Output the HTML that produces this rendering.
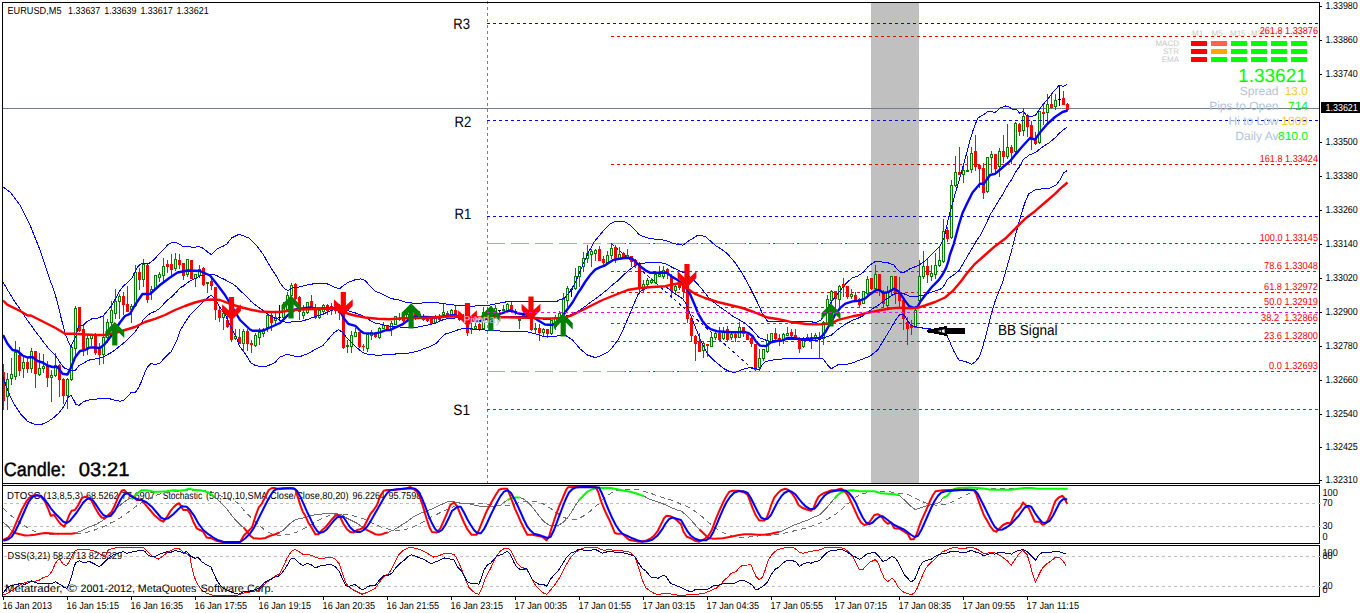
<!DOCTYPE html>
<html lang="en"><head><meta charset="utf-8"><title>EURUSD,M5</title>
<style>html,body{margin:0;padding:0;background:#fff;overflow:hidden}svg{display:block}text{font-family:"Liberation Sans",sans-serif;white-space:pre;text-rendering:geometricPrecision}</style></head><body>
<svg width="1360" height="613" viewBox="0 0 1360 613">
<rect width="1360" height="613" fill="#fff"/>
<g shape-rendering="crispEdges">
<rect x="871" y="3" width="48" height="480" fill="#c0c0c0"/>
</g>
<g shape-rendering="crispEdges">
<line x1="3" y1="108.5" x2="1319" y2="108.5" stroke="#708090" stroke-width="1"/>
<line x1="487.5" y1="1" x2="487.5" y2="483" stroke="#808080" stroke-width="1" stroke-dasharray="3 3" stroke-dashoffset="0"/>
<line x1="611" y1="36.5" x2="1318" y2="36.5" stroke="#ff0000" stroke-width="1" stroke-dasharray="3 3" stroke-dashoffset="0"/>
<line x1="611" y1="164.5" x2="1318" y2="164.5" stroke="#ff0000" stroke-width="1" stroke-dasharray="3 3" stroke-dashoffset="0"/>
<line x1="611" y1="243.5" x2="1318" y2="243.5" stroke="#ff0000" stroke-width="1" stroke-dasharray="3 3" stroke-dashoffset="0"/>
<line x1="611" y1="271.5" x2="1318" y2="271.5" stroke="#ff0000" stroke-width="1" stroke-dasharray="3 3" stroke-dashoffset="0"/>
<line x1="611" y1="292.5" x2="1318" y2="292.5" stroke="#ff0000" stroke-width="1" stroke-dasharray="3 3" stroke-dashoffset="0"/>
<line x1="611" y1="307.5" x2="1318" y2="307.5" stroke="#ff0000" stroke-width="1" stroke-dasharray="3 3" stroke-dashoffset="0"/>
<line x1="611" y1="323.5" x2="1318" y2="323.5" stroke="#ff0000" stroke-width="1" stroke-dasharray="3 3" stroke-dashoffset="0"/>
<line x1="611" y1="341.5" x2="1318" y2="341.5" stroke="#ff0000" stroke-width="1" stroke-dasharray="3 3" stroke-dashoffset="0"/>
<line x1="611" y1="371.5" x2="1318" y2="371.5" stroke="#ff0000" stroke-width="1" stroke-dasharray="3 3" stroke-dashoffset="0"/>
<line x1="487" y1="243.5" x2="866" y2="243.5" stroke="#ffa500" stroke-width="1" stroke-dasharray="18 6" stroke-dashoffset="0"/>
<line x1="487" y1="371.5" x2="866" y2="371.5" stroke="#ffa500" stroke-width="1" stroke-dasharray="18 6" stroke-dashoffset="0"/>
</g>
<line x1="611.5" y1="243.5" x2="755.5" y2="371.5" stroke="#0000ff" stroke-width="1" stroke-dasharray="3 3" shape-rendering="crispEdges"/>
<g shape-rendering="crispEdges">
<line x1="3.5" y1="364" x2="3.5" y2="410" stroke="#ff0000" stroke-width="1"/>
<rect x="2" y="372" width="3" height="29" fill="#ff0000"/>
<line x1="7.5" y1="373" x2="7.5" y2="410" stroke="#008000" stroke-width="1"/>
<rect x="6.5" y="379.5" width="2" height="17" fill="#fff" stroke="#008000"/>
<line x1="11.5" y1="358" x2="11.5" y2="385" stroke="#008000" stroke-width="1"/>
<rect x="10.5" y="374.5" width="2" height="4" fill="#fff" stroke="#008000"/>
<line x1="15.5" y1="341" x2="15.5" y2="380" stroke="#008000" stroke-width="1"/>
<rect x="14.5" y="352.5" width="2" height="24" fill="#fff" stroke="#008000"/>
<line x1="19.5" y1="347" x2="19.5" y2="376" stroke="#ff0000" stroke-width="1"/>
<rect x="18" y="355" width="3" height="16" fill="#ff0000"/>
<line x1="23.5" y1="356" x2="23.5" y2="378" stroke="#008000" stroke-width="1"/>
<rect x="22.5" y="362.5" width="2" height="6" fill="#fff" stroke="#008000"/>
<line x1="27.5" y1="358" x2="27.5" y2="373" stroke="#ff0000" stroke-width="1"/>
<rect x="26" y="362" width="3" height="7" fill="#ff0000"/>
<line x1="31.5" y1="348" x2="31.5" y2="373" stroke="#008000" stroke-width="1"/>
<rect x="30.5" y="351.5" width="2" height="17" fill="#fff" stroke="#008000"/>
<line x1="35.5" y1="351" x2="35.5" y2="388" stroke="#ff0000" stroke-width="1"/>
<rect x="34" y="351" width="3" height="23" fill="#ff0000"/>
<line x1="39.5" y1="353" x2="39.5" y2="376" stroke="#008000" stroke-width="1"/>
<rect x="38.5" y="368.5" width="2" height="6" fill="#fff" stroke="#008000"/>
<line x1="43.5" y1="354" x2="43.5" y2="373" stroke="#008000" stroke-width="1"/>
<rect x="42.5" y="366.5" width="2" height="2" fill="#fff" stroke="#008000"/>
<line x1="47.5" y1="361" x2="47.5" y2="387" stroke="#ff0000" stroke-width="1"/>
<rect x="46" y="366" width="3" height="12" fill="#ff0000"/>
<line x1="51.5" y1="370" x2="51.5" y2="402" stroke="#008000" stroke-width="1"/>
<rect x="50.5" y="375.5" width="2" height="2" fill="#fff" stroke="#008000"/>
<line x1="55.5" y1="353" x2="55.5" y2="377" stroke="#008000" stroke-width="1"/>
<rect x="54.5" y="365.5" width="2" height="10" fill="#fff" stroke="#008000"/>
<line x1="59.5" y1="364" x2="59.5" y2="397" stroke="#ff0000" stroke-width="1"/>
<rect x="58" y="365" width="3" height="15" fill="#ff0000"/>
<line x1="63.5" y1="378" x2="63.5" y2="404" stroke="#ff0000" stroke-width="1"/>
<rect x="62" y="379" width="3" height="17" fill="#ff0000"/>
<line x1="67.5" y1="378" x2="67.5" y2="409" stroke="#008000" stroke-width="1"/>
<rect x="66.5" y="379.5" width="2" height="16" fill="#fff" stroke="#008000"/>
<line x1="71.5" y1="346" x2="71.5" y2="381" stroke="#008000" stroke-width="1"/>
<rect x="70.5" y="347.5" width="2" height="32" fill="#fff" stroke="#008000"/>
<line x1="75.5" y1="306" x2="75.5" y2="357" stroke="#008000" stroke-width="1"/>
<rect x="74.5" y="308.5" width="2" height="40" fill="#fff" stroke="#008000"/>
<line x1="79.5" y1="307" x2="79.5" y2="332" stroke="#ff0000" stroke-width="1"/>
<rect x="78" y="307" width="3" height="24" fill="#ff0000"/>
<line x1="83.5" y1="326" x2="83.5" y2="356" stroke="#ff0000" stroke-width="1"/>
<rect x="82" y="329" width="3" height="20" fill="#ff0000"/>
<line x1="87.5" y1="334" x2="87.5" y2="355" stroke="#008000" stroke-width="1"/>
<rect x="86.5" y="338.5" width="2" height="9" fill="#fff" stroke="#008000"/>
<line x1="91.5" y1="335" x2="91.5" y2="346" stroke="#008000" stroke-width="1"/>
<rect x="90.5" y="335.5" width="2" height="3" fill="#fff" stroke="#008000"/>
<line x1="95.5" y1="333" x2="95.5" y2="355" stroke="#ff0000" stroke-width="1"/>
<rect x="94" y="334" width="3" height="19" fill="#ff0000"/>
<line x1="99.5" y1="343" x2="99.5" y2="365" stroke="#ff0000" stroke-width="1"/>
<rect x="98" y="349" width="3" height="6" fill="#ff0000"/>
<line x1="103.5" y1="316" x2="103.5" y2="364" stroke="#008000" stroke-width="1"/>
<rect x="102.5" y="337.5" width="2" height="17" fill="#fff" stroke="#008000"/>
<line x1="107.5" y1="319" x2="107.5" y2="343" stroke="#008000" stroke-width="1"/>
<rect x="106.5" y="322.5" width="2" height="15" fill="#fff" stroke="#008000"/>
<line x1="111.5" y1="301" x2="111.5" y2="326" stroke="#008000" stroke-width="1"/>
<rect x="110.5" y="310.5" width="2" height="12" fill="#fff" stroke="#008000"/>
<line x1="115.5" y1="289" x2="115.5" y2="319" stroke="#008000" stroke-width="1"/>
<rect x="114.5" y="301.5" width="2" height="12" fill="#fff" stroke="#008000"/>
<line x1="119.5" y1="294" x2="119.5" y2="319" stroke="#008000" stroke-width="1"/>
<rect x="118.5" y="296.5" width="2" height="5" fill="#fff" stroke="#008000"/>
<line x1="123.5" y1="292" x2="123.5" y2="315" stroke="#ff0000" stroke-width="1"/>
<rect x="122" y="296" width="3" height="9" fill="#ff0000"/>
<line x1="127.5" y1="286" x2="127.5" y2="312" stroke="#ff0000" stroke-width="1"/>
<rect x="126" y="304" width="3" height="8" fill="#ff0000"/>
<line x1="131.5" y1="304" x2="131.5" y2="323" stroke="#008000" stroke-width="1"/>
<rect x="130.5" y="306.5" width="2" height="3" fill="#fff" stroke="#008000"/>
<line x1="135.5" y1="265" x2="135.5" y2="307" stroke="#008000" stroke-width="1"/>
<rect x="134.5" y="272.5" width="2" height="33" fill="#fff" stroke="#008000"/>
<line x1="139.5" y1="268" x2="139.5" y2="290" stroke="#ff0000" stroke-width="1"/>
<rect x="138" y="272" width="3" height="8" fill="#ff0000"/>
<line x1="143.5" y1="259" x2="143.5" y2="287" stroke="#008000" stroke-width="1"/>
<rect x="142.5" y="264.5" width="2" height="15" fill="#fff" stroke="#008000"/>
<line x1="147.5" y1="264" x2="147.5" y2="303" stroke="#ff0000" stroke-width="1"/>
<rect x="146" y="265" width="3" height="35" fill="#ff0000"/>
<line x1="151.5" y1="286" x2="151.5" y2="300" stroke="#008000" stroke-width="1"/>
<rect x="150.5" y="289.5" width="2" height="3" fill="#fff" stroke="#008000"/>
<line x1="155.5" y1="275" x2="155.5" y2="289" stroke="#008000" stroke-width="1"/>
<rect x="154.5" y="275.5" width="2" height="13" fill="#fff" stroke="#008000"/>
<line x1="159.5" y1="272" x2="159.5" y2="282" stroke="#008000" stroke-width="1"/>
<rect x="158.5" y="274.5" width="2" height="3" fill="#fff" stroke="#008000"/>
<line x1="163.5" y1="258" x2="163.5" y2="281" stroke="#008000" stroke-width="1"/>
<rect x="162.5" y="266.5" width="2" height="9" fill="#fff" stroke="#008000"/>
<line x1="167.5" y1="260" x2="167.5" y2="273" stroke="#ff0000" stroke-width="1"/>
<rect x="166" y="264" width="3" height="3" fill="#ff0000"/>
<line x1="171.5" y1="254" x2="171.5" y2="275" stroke="#ff0000" stroke-width="1"/>
<rect x="170" y="264" width="3" height="6" fill="#ff0000"/>
<line x1="175.5" y1="253" x2="175.5" y2="271" stroke="#008000" stroke-width="1"/>
<rect x="174.5" y="259.5" width="2" height="9" fill="#fff" stroke="#008000"/>
<line x1="179.5" y1="254" x2="179.5" y2="269" stroke="#ff0000" stroke-width="1"/>
<rect x="178" y="260" width="3" height="5" fill="#ff0000"/>
<line x1="183.5" y1="263" x2="183.5" y2="280" stroke="#ff0000" stroke-width="1"/>
<rect x="182" y="263" width="3" height="13" fill="#ff0000"/>
<line x1="187.5" y1="259" x2="187.5" y2="277" stroke="#008000" stroke-width="1"/>
<rect x="186.5" y="259.5" width="2" height="15" fill="#fff" stroke="#008000"/>
<line x1="191.5" y1="260" x2="191.5" y2="279" stroke="#ff0000" stroke-width="1"/>
<rect x="190" y="260" width="3" height="19" fill="#ff0000"/>
<line x1="195.5" y1="274" x2="195.5" y2="287" stroke="#008000" stroke-width="1"/>
<rect x="194.5" y="274.5" width="2" height="4" fill="#fff" stroke="#008000"/>
<line x1="199.5" y1="265" x2="199.5" y2="278" stroke="#008000" stroke-width="1"/>
<rect x="198.5" y="269.5" width="2" height="6" fill="#fff" stroke="#008000"/>
<line x1="203.5" y1="267" x2="203.5" y2="286" stroke="#ff0000" stroke-width="1"/>
<rect x="202" y="268" width="3" height="17" fill="#ff0000"/>
<line x1="207.5" y1="282" x2="207.5" y2="293" stroke="#008000" stroke-width="1"/>
<rect x="206.5" y="282.5" width="2" height="1" fill="#fff" stroke="#008000"/>
<line x1="211.5" y1="279" x2="211.5" y2="290" stroke="#ff0000" stroke-width="1"/>
<rect x="210" y="281" width="3" height="5" fill="#ff0000"/>
<line x1="215.5" y1="287" x2="215.5" y2="320" stroke="#ff0000" stroke-width="1"/>
<rect x="214" y="287" width="3" height="23" fill="#ff0000"/>
<line x1="219.5" y1="308" x2="219.5" y2="322" stroke="#ff0000" stroke-width="1"/>
<rect x="218" y="310" width="3" height="8" fill="#ff0000"/>
<line x1="223.5" y1="312" x2="223.5" y2="330" stroke="#008000" stroke-width="1"/>
<rect x="222.5" y="313.5" width="2" height="4" fill="#fff" stroke="#008000"/>
<line x1="227.5" y1="316" x2="227.5" y2="328" stroke="#ff0000" stroke-width="1"/>
<rect x="226" y="320" width="3" height="7" fill="#ff0000"/>
<line x1="231.5" y1="318" x2="231.5" y2="342" stroke="#ff0000" stroke-width="1"/>
<rect x="230" y="319" width="3" height="21" fill="#ff0000"/>
<line x1="235.5" y1="329" x2="235.5" y2="340" stroke="#008000" stroke-width="1"/>
<rect x="234.5" y="336.5" width="2" height="2" fill="#fff" stroke="#008000"/>
<line x1="239.5" y1="329" x2="239.5" y2="344" stroke="#ff0000" stroke-width="1"/>
<rect x="238" y="337" width="3" height="7" fill="#ff0000"/>
<line x1="243.5" y1="329" x2="243.5" y2="352" stroke="#008000" stroke-width="1"/>
<rect x="242.5" y="331.5" width="2" height="12" fill="#fff" stroke="#008000"/>
<line x1="247.5" y1="329" x2="247.5" y2="351" stroke="#ff0000" stroke-width="1"/>
<rect x="246" y="331" width="3" height="13" fill="#ff0000"/>
<line x1="251.5" y1="340" x2="251.5" y2="353" stroke="#ff0000" stroke-width="1"/>
<rect x="250" y="343" width="3" height="2" fill="#ff0000"/>
<line x1="255.5" y1="333" x2="255.5" y2="347" stroke="#008000" stroke-width="1"/>
<rect x="254.5" y="335.5" width="2" height="10" fill="#fff" stroke="#008000"/>
<line x1="259.5" y1="328" x2="259.5" y2="345" stroke="#008000" stroke-width="1"/>
<rect x="258.5" y="332.5" width="2" height="5" fill="#fff" stroke="#008000"/>
<line x1="263.5" y1="328" x2="263.5" y2="337" stroke="#008000" stroke-width="1"/>
<rect x="262.5" y="329.5" width="2" height="4" fill="#fff" stroke="#008000"/>
<line x1="267.5" y1="314" x2="267.5" y2="332" stroke="#008000" stroke-width="1"/>
<rect x="266.5" y="315.5" width="2" height="12" fill="#fff" stroke="#008000"/>
<line x1="271.5" y1="313" x2="271.5" y2="331" stroke="#ff0000" stroke-width="1"/>
<rect x="270" y="315" width="3" height="8" fill="#ff0000"/>
<line x1="275.5" y1="313" x2="275.5" y2="324" stroke="#008000" stroke-width="1"/>
<rect x="274.5" y="317.5" width="2" height="3" fill="#fff" stroke="#008000"/>
<line x1="279.5" y1="305" x2="279.5" y2="321" stroke="#000" stroke-width="1"/>
<line x1="278" y1="317.5" x2="281" y2="317.5" stroke="#000" stroke-width="1"/>
<line x1="283.5" y1="302" x2="283.5" y2="322" stroke="#008000" stroke-width="1"/>
<rect x="282.5" y="305.5" width="2" height="12" fill="#fff" stroke="#008000"/>
<line x1="287.5" y1="292" x2="287.5" y2="311" stroke="#008000" stroke-width="1"/>
<rect x="286.5" y="295.5" width="2" height="14" fill="#fff" stroke="#008000"/>
<line x1="291.5" y1="283" x2="291.5" y2="297" stroke="#008000" stroke-width="1"/>
<rect x="290.5" y="285.5" width="2" height="10" fill="#fff" stroke="#008000"/>
<line x1="295.5" y1="283" x2="295.5" y2="303" stroke="#ff0000" stroke-width="1"/>
<rect x="294" y="284" width="3" height="15" fill="#ff0000"/>
<line x1="299.5" y1="296" x2="299.5" y2="320" stroke="#ff0000" stroke-width="1"/>
<rect x="298" y="297" width="3" height="15" fill="#ff0000"/>
<line x1="303.5" y1="305" x2="303.5" y2="319" stroke="#008000" stroke-width="1"/>
<rect x="302.5" y="312.5" width="2" height="3" fill="#fff" stroke="#008000"/>
<line x1="307.5" y1="302" x2="307.5" y2="314" stroke="#008000" stroke-width="1"/>
<rect x="306.5" y="302.5" width="2" height="10" fill="#fff" stroke="#008000"/>
<line x1="311.5" y1="295" x2="311.5" y2="310" stroke="#ff0000" stroke-width="1"/>
<rect x="310" y="301" width="3" height="6" fill="#ff0000"/>
<line x1="315.5" y1="304" x2="315.5" y2="319" stroke="#ff0000" stroke-width="1"/>
<rect x="314" y="310" width="3" height="8" fill="#ff0000"/>
<line x1="319.5" y1="308" x2="319.5" y2="319" stroke="#008000" stroke-width="1"/>
<rect x="318.5" y="310.5" width="2" height="7" fill="#fff" stroke="#008000"/>
<line x1="323.5" y1="304" x2="323.5" y2="313" stroke="#008000" stroke-width="1"/>
<rect x="322.5" y="305.5" width="2" height="6" fill="#fff" stroke="#008000"/>
<line x1="327.5" y1="304" x2="327.5" y2="315" stroke="#ff0000" stroke-width="1"/>
<rect x="326" y="305" width="3" height="6" fill="#ff0000"/>
<line x1="331.5" y1="303" x2="331.5" y2="315" stroke="#ff0000" stroke-width="1"/>
<rect x="330" y="306" width="3" height="4" fill="#ff0000"/>
<line x1="335.5" y1="305" x2="335.5" y2="314" stroke="#ff0000" stroke-width="1"/>
<rect x="334" y="307" width="3" height="4" fill="#ff0000"/>
<line x1="339.5" y1="304" x2="339.5" y2="320" stroke="#ff0000" stroke-width="1"/>
<rect x="338" y="308" width="3" height="5" fill="#ff0000"/>
<line x1="343.5" y1="292" x2="343.5" y2="349" stroke="#ff0000" stroke-width="1"/>
<rect x="342" y="293" width="3" height="55" fill="#ff0000"/>
<line x1="347.5" y1="340" x2="347.5" y2="353" stroke="#008000" stroke-width="1"/>
<rect x="346.5" y="345.5" width="2" height="1" fill="#fff" stroke="#008000"/>
<line x1="351.5" y1="331" x2="351.5" y2="353" stroke="#008000" stroke-width="1"/>
<rect x="350.5" y="335.5" width="2" height="11" fill="#fff" stroke="#008000"/>
<line x1="355.5" y1="328" x2="355.5" y2="337" stroke="#008000" stroke-width="1"/>
<rect x="354.5" y="332.5" width="2" height="4" fill="#fff" stroke="#008000"/>
<line x1="359.5" y1="332" x2="359.5" y2="348" stroke="#ff0000" stroke-width="1"/>
<rect x="358" y="332" width="3" height="15" fill="#ff0000"/>
<line x1="363.5" y1="344" x2="363.5" y2="351" stroke="#ff0000" stroke-width="1"/>
<line x1="362" y1="346.5" x2="365" y2="346.5" stroke="#ff0000" stroke-width="1"/>
<line x1="367.5" y1="334" x2="367.5" y2="352" stroke="#008000" stroke-width="1"/>
<rect x="366.5" y="334.5" width="2" height="14" fill="#fff" stroke="#008000"/>
<line x1="371.5" y1="330" x2="371.5" y2="340" stroke="#008000" stroke-width="1"/>
<rect x="370.5" y="332.5" width="2" height="3" fill="#fff" stroke="#008000"/>
<line x1="375.5" y1="332" x2="375.5" y2="338" stroke="#ff0000" stroke-width="1"/>
<rect x="374" y="333" width="3" height="4" fill="#ff0000"/>
<line x1="379.5" y1="327" x2="379.5" y2="339" stroke="#008000" stroke-width="1"/>
<rect x="378.5" y="328.5" width="2" height="9" fill="#fff" stroke="#008000"/>
<line x1="383.5" y1="322" x2="383.5" y2="329" stroke="#008000" stroke-width="1"/>
<rect x="382.5" y="325.5" width="2" height="3" fill="#fff" stroke="#008000"/>
<line x1="387.5" y1="325" x2="387.5" y2="331" stroke="#ff0000" stroke-width="1"/>
<rect x="386" y="326" width="3" height="5" fill="#ff0000"/>
<line x1="391.5" y1="321" x2="391.5" y2="336" stroke="#008000" stroke-width="1"/>
<rect x="390.5" y="323.5" width="2" height="6" fill="#fff" stroke="#008000"/>
<line x1="395.5" y1="316" x2="395.5" y2="325" stroke="#008000" stroke-width="1"/>
<rect x="394.5" y="316.5" width="2" height="8" fill="#fff" stroke="#008000"/>
<line x1="399.5" y1="313" x2="399.5" y2="321" stroke="#ff0000" stroke-width="1"/>
<rect x="398" y="318" width="3" height="2" fill="#ff0000"/>
<line x1="403.5" y1="314" x2="403.5" y2="322" stroke="#ff0000" stroke-width="1"/>
<rect x="402" y="316" width="3" height="5" fill="#ff0000"/>
<line x1="407.5" y1="312" x2="407.5" y2="321" stroke="#008000" stroke-width="1"/>
<rect x="406.5" y="314.5" width="2" height="4" fill="#fff" stroke="#008000"/>
<line x1="411.5" y1="311" x2="411.5" y2="320" stroke="#008000" stroke-width="1"/>
<rect x="410.5" y="314.5" width="2" height="3" fill="#fff" stroke="#008000"/>
<line x1="415.5" y1="311" x2="415.5" y2="320" stroke="#ff0000" stroke-width="1"/>
<rect x="414" y="313" width="3" height="5" fill="#ff0000"/>
<line x1="419.5" y1="311" x2="419.5" y2="319" stroke="#008000" stroke-width="1"/>
<rect x="418.5" y="314.5" width="2" height="2" fill="#fff" stroke="#008000"/>
<line x1="423.5" y1="314" x2="423.5" y2="321" stroke="#ff0000" stroke-width="1"/>
<rect x="422" y="316" width="3" height="4" fill="#ff0000"/>
<line x1="427.5" y1="316" x2="427.5" y2="322" stroke="#ff0000" stroke-width="1"/>
<rect x="426" y="317" width="3" height="4" fill="#ff0000"/>
<line x1="431.5" y1="318" x2="431.5" y2="325" stroke="#ff0000" stroke-width="1"/>
<rect x="430" y="318" width="3" height="6" fill="#ff0000"/>
<line x1="435.5" y1="315" x2="435.5" y2="324" stroke="#008000" stroke-width="1"/>
<rect x="434.5" y="316.5" width="2" height="6" fill="#fff" stroke="#008000"/>
<line x1="439.5" y1="314" x2="439.5" y2="321" stroke="#ff0000" stroke-width="1"/>
<rect x="438" y="316" width="3" height="4" fill="#ff0000"/>
<line x1="443.5" y1="304" x2="443.5" y2="316" stroke="#008000" stroke-width="1"/>
<rect x="442.5" y="312.5" width="2" height="2" fill="#fff" stroke="#008000"/>
<line x1="447.5" y1="311" x2="447.5" y2="317" stroke="#ff0000" stroke-width="1"/>
<rect x="446" y="313" width="3" height="4" fill="#ff0000"/>
<line x1="451.5" y1="309" x2="451.5" y2="317" stroke="#008000" stroke-width="1"/>
<rect x="450.5" y="310.5" width="2" height="6" fill="#fff" stroke="#008000"/>
<line x1="455.5" y1="306" x2="455.5" y2="318" stroke="#ff0000" stroke-width="1"/>
<rect x="454" y="310" width="3" height="7" fill="#ff0000"/>
<line x1="459.5" y1="312" x2="459.5" y2="321" stroke="#ff0000" stroke-width="1"/>
<rect x="458" y="314" width="3" height="6" fill="#ff0000"/>
<line x1="463.5" y1="314" x2="463.5" y2="322" stroke="#ff0000" stroke-width="1"/>
<rect x="462" y="316" width="3" height="5" fill="#ff0000"/>
<line x1="467.5" y1="320" x2="467.5" y2="336" stroke="#ff0000" stroke-width="1"/>
<rect x="466" y="325" width="3" height="8" fill="#ff0000"/>
<line x1="471.5" y1="322" x2="471.5" y2="334" stroke="#008000" stroke-width="1"/>
<rect x="470.5" y="328.5" width="2" height="1" fill="#fff" stroke="#008000"/>
<line x1="475.5" y1="322" x2="475.5" y2="330" stroke="#008000" stroke-width="1"/>
<rect x="474.5" y="326.5" width="2" height="2" fill="#fff" stroke="#008000"/>
<line x1="479.5" y1="323" x2="479.5" y2="331" stroke="#ff0000" stroke-width="1"/>
<rect x="478" y="324" width="3" height="5" fill="#ff0000"/>
<line x1="483.5" y1="307" x2="483.5" y2="330" stroke="#008000" stroke-width="1"/>
<rect x="482.5" y="312.5" width="2" height="16" fill="#fff" stroke="#008000"/>
<line x1="487.5" y1="307" x2="487.5" y2="319" stroke="#008000" stroke-width="1"/>
<rect x="486.5" y="310.5" width="2" height="5" fill="#fff" stroke="#008000"/>
<line x1="491.5" y1="306" x2="491.5" y2="316" stroke="#008000" stroke-width="1"/>
<rect x="490.5" y="308.5" width="2" height="5" fill="#fff" stroke="#008000"/>
<line x1="495.5" y1="305" x2="495.5" y2="313" stroke="#008000" stroke-width="1"/>
<rect x="494.5" y="308.5" width="2" height="3" fill="#fff" stroke="#008000"/>
<line x1="499.5" y1="310" x2="499.5" y2="313" stroke="#000" stroke-width="1"/>
<line x1="498" y1="310.5" x2="501" y2="310.5" stroke="#000" stroke-width="1"/>
<line x1="503.5" y1="305" x2="503.5" y2="311" stroke="#008000" stroke-width="1"/>
<rect x="502.5" y="309.5" width="2" height="1" fill="#fff" stroke="#008000"/>
<line x1="507.5" y1="303" x2="507.5" y2="311" stroke="#008000" stroke-width="1"/>
<rect x="506.5" y="304.5" width="2" height="6" fill="#fff" stroke="#008000"/>
<line x1="511.5" y1="302" x2="511.5" y2="312" stroke="#ff0000" stroke-width="1"/>
<rect x="510" y="305" width="3" height="6" fill="#ff0000"/>
<line x1="515.5" y1="309" x2="515.5" y2="315" stroke="#ff0000" stroke-width="1"/>
<rect x="514" y="311" width="3" height="2" fill="#ff0000"/>
<line x1="519.5" y1="319" x2="519.5" y2="329" stroke="#008000" stroke-width="1"/>
<rect x="518.5" y="319.5" width="2" height="1" fill="#fff" stroke="#008000"/>
<line x1="523.5" y1="313" x2="523.5" y2="319" stroke="#ff0000" stroke-width="1"/>
<rect x="522" y="314" width="3" height="3" fill="#ff0000"/>
<line x1="527.5" y1="313" x2="527.5" y2="319" stroke="#008000" stroke-width="1"/>
<rect x="526.5" y="315.5" width="2" height="1" fill="#fff" stroke="#008000"/>
<line x1="531.5" y1="311" x2="531.5" y2="331" stroke="#ff0000" stroke-width="1"/>
<rect x="530" y="312" width="3" height="18" fill="#ff0000"/>
<line x1="535.5" y1="323" x2="535.5" y2="333" stroke="#008000" stroke-width="1"/>
<rect x="534.5" y="328.5" width="2" height="1" fill="#fff" stroke="#008000"/>
<line x1="539.5" y1="324" x2="539.5" y2="341" stroke="#ff0000" stroke-width="1"/>
<rect x="538" y="328" width="3" height="5" fill="#ff0000"/>
<line x1="543.5" y1="328" x2="543.5" y2="337" stroke="#008000" stroke-width="1"/>
<rect x="542.5" y="329.5" width="2" height="3" fill="#fff" stroke="#008000"/>
<line x1="547.5" y1="329" x2="547.5" y2="338" stroke="#ff0000" stroke-width="1"/>
<rect x="546" y="329" width="3" height="5" fill="#ff0000"/>
<line x1="551.5" y1="320" x2="551.5" y2="335" stroke="#008000" stroke-width="1"/>
<rect x="550.5" y="320.5" width="2" height="13" fill="#fff" stroke="#008000"/>
<line x1="555.5" y1="315" x2="555.5" y2="330" stroke="#008000" stroke-width="1"/>
<rect x="554.5" y="317.5" width="2" height="9" fill="#fff" stroke="#008000"/>
<line x1="559.5" y1="311" x2="559.5" y2="323" stroke="#008000" stroke-width="1"/>
<rect x="558.5" y="313.5" width="2" height="7" fill="#fff" stroke="#008000"/>
<line x1="563.5" y1="293" x2="563.5" y2="315" stroke="#008000" stroke-width="1"/>
<rect x="562.5" y="299.5" width="2" height="14" fill="#fff" stroke="#008000"/>
<line x1="567.5" y1="286" x2="567.5" y2="307" stroke="#008000" stroke-width="1"/>
<rect x="566.5" y="288.5" width="2" height="12" fill="#fff" stroke="#008000"/>
<line x1="571.5" y1="288" x2="571.5" y2="297" stroke="#000" stroke-width="1"/>
<line x1="570" y1="289.5" x2="573" y2="289.5" stroke="#000" stroke-width="1"/>
<line x1="575.5" y1="268" x2="575.5" y2="290" stroke="#008000" stroke-width="1"/>
<rect x="574.5" y="276.5" width="2" height="12" fill="#fff" stroke="#008000"/>
<line x1="579.5" y1="266" x2="579.5" y2="287" stroke="#008000" stroke-width="1"/>
<rect x="578.5" y="266.5" width="2" height="10" fill="#fff" stroke="#008000"/>
<line x1="583.5" y1="252" x2="583.5" y2="272" stroke="#008000" stroke-width="1"/>
<rect x="582.5" y="258.5" width="2" height="8" fill="#fff" stroke="#008000"/>
<line x1="587.5" y1="245" x2="587.5" y2="263" stroke="#008000" stroke-width="1"/>
<rect x="586.5" y="253.5" width="2" height="5" fill="#fff" stroke="#008000"/>
<line x1="591.5" y1="249" x2="591.5" y2="267" stroke="#008000" stroke-width="1"/>
<rect x="590.5" y="251.5" width="2" height="3" fill="#fff" stroke="#008000"/>
<line x1="595.5" y1="249" x2="595.5" y2="261" stroke="#008000" stroke-width="1"/>
<rect x="594.5" y="250.5" width="2" height="3" fill="#fff" stroke="#008000"/>
<line x1="599.5" y1="246" x2="599.5" y2="261" stroke="#ff0000" stroke-width="1"/>
<rect x="598" y="249" width="3" height="12" fill="#ff0000"/>
<line x1="603.5" y1="256" x2="603.5" y2="266" stroke="#ff0000" stroke-width="1"/>
<rect x="602" y="259" width="3" height="4" fill="#ff0000"/>
<line x1="607.5" y1="251" x2="607.5" y2="263" stroke="#008000" stroke-width="1"/>
<rect x="606.5" y="255.5" width="2" height="7" fill="#fff" stroke="#008000"/>
<line x1="611.5" y1="244" x2="611.5" y2="259" stroke="#008000" stroke-width="1"/>
<rect x="610.5" y="248.5" width="2" height="7" fill="#fff" stroke="#008000"/>
<line x1="615.5" y1="245" x2="615.5" y2="263" stroke="#ff0000" stroke-width="1"/>
<rect x="614" y="247" width="3" height="12" fill="#ff0000"/>
<line x1="619.5" y1="247" x2="619.5" y2="260" stroke="#008000" stroke-width="1"/>
<rect x="618.5" y="254.5" width="2" height="4" fill="#fff" stroke="#008000"/>
<line x1="623.5" y1="252" x2="623.5" y2="259" stroke="#ff0000" stroke-width="1"/>
<rect x="622" y="253" width="3" height="5" fill="#ff0000"/>
<line x1="627.5" y1="249" x2="627.5" y2="259" stroke="#008000" stroke-width="1"/>
<rect x="626.5" y="255.5" width="2" height="3" fill="#fff" stroke="#008000"/>
<line x1="631.5" y1="256" x2="631.5" y2="267" stroke="#ff0000" stroke-width="1"/>
<rect x="630" y="256" width="3" height="6" fill="#ff0000"/>
<line x1="635.5" y1="259" x2="635.5" y2="268" stroke="#ff0000" stroke-width="1"/>
<rect x="634" y="260" width="3" height="6" fill="#ff0000"/>
<line x1="639.5" y1="262" x2="639.5" y2="294" stroke="#ff0000" stroke-width="1"/>
<rect x="638" y="263" width="3" height="26" fill="#ff0000"/>
<line x1="643.5" y1="280" x2="643.5" y2="293" stroke="#008000" stroke-width="1"/>
<rect x="642.5" y="284.5" width="2" height="3" fill="#fff" stroke="#008000"/>
<line x1="647.5" y1="278" x2="647.5" y2="287" stroke="#008000" stroke-width="1"/>
<rect x="646.5" y="280.5" width="2" height="4" fill="#fff" stroke="#008000"/>
<line x1="651.5" y1="278" x2="651.5" y2="284" stroke="#008000" stroke-width="1"/>
<rect x="650.5" y="280.5" width="2" height="2" fill="#fff" stroke="#008000"/>
<line x1="655.5" y1="274" x2="655.5" y2="284" stroke="#008000" stroke-width="1"/>
<rect x="654.5" y="274.5" width="2" height="8" fill="#fff" stroke="#008000"/>
<line x1="659.5" y1="266" x2="659.5" y2="277" stroke="#008000" stroke-width="1"/>
<rect x="658.5" y="274.5" width="2" height="2" fill="#fff" stroke="#008000"/>
<line x1="663.5" y1="266" x2="663.5" y2="279" stroke="#008000" stroke-width="1"/>
<rect x="662.5" y="270.5" width="2" height="6" fill="#fff" stroke="#008000"/>
<line x1="667.5" y1="268" x2="667.5" y2="279" stroke="#ff0000" stroke-width="1"/>
<rect x="666" y="269" width="3" height="5" fill="#ff0000"/>
<line x1="671.5" y1="274" x2="671.5" y2="296" stroke="#ff0000" stroke-width="1"/>
<rect x="670" y="277" width="3" height="14" fill="#ff0000"/>
<line x1="675.5" y1="284" x2="675.5" y2="295" stroke="#008000" stroke-width="1"/>
<rect x="674.5" y="286.5" width="2" height="4" fill="#fff" stroke="#008000"/>
<line x1="679.5" y1="282" x2="679.5" y2="290" stroke="#ff0000" stroke-width="1"/>
<rect x="678" y="284" width="3" height="4" fill="#ff0000"/>
<line x1="683.5" y1="284" x2="683.5" y2="298" stroke="#ff0000" stroke-width="1"/>
<rect x="682" y="285" width="3" height="7" fill="#ff0000"/>
<line x1="687.5" y1="284" x2="687.5" y2="323" stroke="#ff0000" stroke-width="1"/>
<rect x="686" y="285" width="3" height="34" fill="#ff0000"/>
<line x1="691.5" y1="317" x2="691.5" y2="342" stroke="#ff0000" stroke-width="1"/>
<rect x="690" y="318" width="3" height="18" fill="#ff0000"/>
<line x1="695.5" y1="335" x2="695.5" y2="361" stroke="#ff0000" stroke-width="1"/>
<rect x="694" y="336" width="3" height="8" fill="#ff0000"/>
<line x1="699.5" y1="333" x2="699.5" y2="352" stroke="#ff0000" stroke-width="1"/>
<rect x="698" y="341" width="3" height="11" fill="#ff0000"/>
<line x1="703.5" y1="341" x2="703.5" y2="358" stroke="#008000" stroke-width="1"/>
<rect x="702.5" y="343.5" width="2" height="7" fill="#fff" stroke="#008000"/>
<line x1="707.5" y1="344" x2="707.5" y2="357" stroke="#ff0000" stroke-width="1"/>
<rect x="706" y="344" width="3" height="2" fill="#ff0000"/>
<line x1="711.5" y1="333" x2="711.5" y2="347" stroke="#008000" stroke-width="1"/>
<rect x="710.5" y="337.5" width="2" height="9" fill="#fff" stroke="#008000"/>
<line x1="715.5" y1="332" x2="715.5" y2="340" stroke="#008000" stroke-width="1"/>
<rect x="714.5" y="333.5" width="2" height="4" fill="#fff" stroke="#008000"/>
<line x1="719.5" y1="327" x2="719.5" y2="341" stroke="#ff0000" stroke-width="1"/>
<rect x="718" y="333" width="3" height="7" fill="#ff0000"/>
<line x1="723.5" y1="327" x2="723.5" y2="340" stroke="#008000" stroke-width="1"/>
<rect x="722.5" y="332.5" width="2" height="6" fill="#fff" stroke="#008000"/>
<line x1="727.5" y1="326" x2="727.5" y2="341" stroke="#ff0000" stroke-width="1"/>
<rect x="726" y="329" width="3" height="11" fill="#ff0000"/>
<line x1="731.5" y1="333" x2="731.5" y2="340" stroke="#008000" stroke-width="1"/>
<rect x="730.5" y="334.5" width="2" height="3" fill="#fff" stroke="#008000"/>
<line x1="735.5" y1="331" x2="735.5" y2="342" stroke="#ff0000" stroke-width="1"/>
<rect x="734" y="334" width="3" height="4" fill="#ff0000"/>
<line x1="739.5" y1="322" x2="739.5" y2="338" stroke="#008000" stroke-width="1"/>
<rect x="738.5" y="327.5" width="2" height="10" fill="#fff" stroke="#008000"/>
<line x1="743.5" y1="327" x2="743.5" y2="337" stroke="#ff0000" stroke-width="1"/>
<rect x="742" y="327" width="3" height="7" fill="#ff0000"/>
<line x1="747.5" y1="333" x2="747.5" y2="340" stroke="#ff0000" stroke-width="1"/>
<rect x="746" y="334" width="3" height="6" fill="#ff0000"/>
<line x1="751.5" y1="337" x2="751.5" y2="347" stroke="#ff0000" stroke-width="1"/>
<rect x="750" y="338" width="3" height="6" fill="#ff0000"/>
<line x1="755.5" y1="344" x2="755.5" y2="371" stroke="#ff0000" stroke-width="1"/>
<rect x="754" y="344" width="3" height="26" fill="#ff0000"/>
<line x1="759.5" y1="349" x2="759.5" y2="371" stroke="#008000" stroke-width="1"/>
<rect x="758.5" y="358.5" width="2" height="9" fill="#fff" stroke="#008000"/>
<line x1="763.5" y1="349" x2="763.5" y2="361" stroke="#008000" stroke-width="1"/>
<rect x="762.5" y="349.5" width="2" height="9" fill="#fff" stroke="#008000"/>
<line x1="767.5" y1="334" x2="767.5" y2="353" stroke="#008000" stroke-width="1"/>
<rect x="766.5" y="340.5" width="2" height="11" fill="#fff" stroke="#008000"/>
<line x1="771.5" y1="333" x2="771.5" y2="342" stroke="#008000" stroke-width="1"/>
<rect x="770.5" y="333.5" width="2" height="8" fill="#fff" stroke="#008000"/>
<line x1="775.5" y1="328" x2="775.5" y2="340" stroke="#ff0000" stroke-width="1"/>
<rect x="774" y="333" width="3" height="6" fill="#ff0000"/>
<line x1="779.5" y1="334" x2="779.5" y2="346" stroke="#ff0000" stroke-width="1"/>
<rect x="778" y="338" width="3" height="3" fill="#ff0000"/>
<line x1="783.5" y1="333" x2="783.5" y2="344" stroke="#008000" stroke-width="1"/>
<rect x="782.5" y="334.5" width="2" height="5" fill="#fff" stroke="#008000"/>
<line x1="787.5" y1="327" x2="787.5" y2="336" stroke="#008000" stroke-width="1"/>
<rect x="786.5" y="333.5" width="2" height="2" fill="#fff" stroke="#008000"/>
<line x1="791.5" y1="329" x2="791.5" y2="338" stroke="#ff0000" stroke-width="1"/>
<rect x="790" y="332" width="3" height="4" fill="#ff0000"/>
<line x1="795.5" y1="329" x2="795.5" y2="340" stroke="#ff0000" stroke-width="1"/>
<rect x="794" y="335" width="3" height="3" fill="#ff0000"/>
<line x1="799.5" y1="337" x2="799.5" y2="353" stroke="#ff0000" stroke-width="1"/>
<rect x="798" y="338" width="3" height="11" fill="#ff0000"/>
<line x1="803.5" y1="337" x2="803.5" y2="348" stroke="#008000" stroke-width="1"/>
<rect x="802.5" y="338.5" width="2" height="8" fill="#fff" stroke="#008000"/>
<line x1="807.5" y1="334" x2="807.5" y2="340" stroke="#008000" stroke-width="1"/>
<rect x="806.5" y="337.5" width="2" height="1" fill="#fff" stroke="#008000"/>
<line x1="811.5" y1="333" x2="811.5" y2="349" stroke="#ff0000" stroke-width="1"/>
<rect x="810" y="337" width="3" height="4" fill="#ff0000"/>
<line x1="815.5" y1="333" x2="815.5" y2="342" stroke="#008000" stroke-width="1"/>
<rect x="814.5" y="335.5" width="2" height="2" fill="#fff" stroke="#008000"/>
<line x1="819.5" y1="332" x2="819.5" y2="359" stroke="#ff0000" stroke-width="1"/>
<rect x="818" y="337" width="3" height="2" fill="#ff0000"/>
<line x1="823.5" y1="321" x2="823.5" y2="345" stroke="#008000" stroke-width="1"/>
<rect x="822.5" y="322.5" width="2" height="16" fill="#fff" stroke="#008000"/>
<line x1="827.5" y1="295" x2="827.5" y2="325" stroke="#008000" stroke-width="1"/>
<rect x="826.5" y="299.5" width="2" height="25" fill="#fff" stroke="#008000"/>
<line x1="831.5" y1="290" x2="831.5" y2="304" stroke="#008000" stroke-width="1"/>
<rect x="830.5" y="291.5" width="2" height="9" fill="#fff" stroke="#008000"/>
<line x1="835.5" y1="291" x2="835.5" y2="307" stroke="#ff0000" stroke-width="1"/>
<rect x="834" y="291" width="3" height="8" fill="#ff0000"/>
<line x1="839.5" y1="285" x2="839.5" y2="308" stroke="#008000" stroke-width="1"/>
<rect x="838.5" y="286.5" width="2" height="13" fill="#fff" stroke="#008000"/>
<line x1="843.5" y1="278" x2="843.5" y2="297" stroke="#ff0000" stroke-width="1"/>
<rect x="842" y="284" width="3" height="3" fill="#ff0000"/>
<line x1="847.5" y1="286" x2="847.5" y2="299" stroke="#ff0000" stroke-width="1"/>
<rect x="846" y="286" width="3" height="11" fill="#ff0000"/>
<line x1="851.5" y1="289" x2="851.5" y2="299" stroke="#008000" stroke-width="1"/>
<rect x="850.5" y="294.5" width="2" height="2" fill="#fff" stroke="#008000"/>
<line x1="855.5" y1="292" x2="855.5" y2="302" stroke="#ff0000" stroke-width="1"/>
<rect x="854" y="295" width="3" height="6" fill="#ff0000"/>
<line x1="859.5" y1="298" x2="859.5" y2="308" stroke="#ff0000" stroke-width="1"/>
<rect x="858" y="299" width="3" height="6" fill="#ff0000"/>
<line x1="863.5" y1="291" x2="863.5" y2="304" stroke="#008000" stroke-width="1"/>
<rect x="862.5" y="291.5" width="2" height="12" fill="#fff" stroke="#008000"/>
<line x1="867.5" y1="276" x2="867.5" y2="295" stroke="#008000" stroke-width="1"/>
<rect x="866.5" y="279.5" width="2" height="14" fill="#fff" stroke="#008000"/>
<line x1="871.5" y1="278" x2="871.5" y2="290" stroke="#ff0000" stroke-width="1"/>
<rect x="870" y="278" width="3" height="11" fill="#ff0000"/>
<line x1="875.5" y1="265" x2="875.5" y2="290" stroke="#008000" stroke-width="1"/>
<rect x="874.5" y="274.5" width="2" height="14" fill="#fff" stroke="#008000"/>
<line x1="879.5" y1="274" x2="879.5" y2="296" stroke="#ff0000" stroke-width="1"/>
<rect x="878" y="274" width="3" height="17" fill="#ff0000"/>
<line x1="883.5" y1="290" x2="883.5" y2="308" stroke="#ff0000" stroke-width="1"/>
<rect x="882" y="292" width="3" height="12" fill="#ff0000"/>
<line x1="887.5" y1="286" x2="887.5" y2="307" stroke="#008000" stroke-width="1"/>
<rect x="886.5" y="292.5" width="2" height="13" fill="#fff" stroke="#008000"/>
<line x1="891.5" y1="276" x2="891.5" y2="295" stroke="#008000" stroke-width="1"/>
<rect x="890.5" y="276.5" width="2" height="14" fill="#fff" stroke="#008000"/>
<line x1="895.5" y1="276" x2="895.5" y2="304" stroke="#ff0000" stroke-width="1"/>
<rect x="894" y="276" width="3" height="17" fill="#ff0000"/>
<line x1="899.5" y1="277" x2="899.5" y2="308" stroke="#ff0000" stroke-width="1"/>
<rect x="898" y="294" width="3" height="7" fill="#ff0000"/>
<line x1="903.5" y1="299" x2="903.5" y2="330" stroke="#ff0000" stroke-width="1"/>
<rect x="902" y="300" width="3" height="19" fill="#ff0000"/>
<line x1="907.5" y1="317" x2="907.5" y2="345" stroke="#ff0000" stroke-width="1"/>
<rect x="906" y="322" width="3" height="7" fill="#ff0000"/>
<line x1="911.5" y1="320" x2="911.5" y2="335" stroke="#ff0000" stroke-width="1"/>
<rect x="910" y="325" width="3" height="3" fill="#ff0000"/>
<line x1="915.5" y1="306" x2="915.5" y2="328" stroke="#008000" stroke-width="1"/>
<rect x="914.5" y="310.5" width="2" height="17" fill="#fff" stroke="#008000"/>
<line x1="919.5" y1="260" x2="919.5" y2="302" stroke="#008000" stroke-width="1"/>
<rect x="918.5" y="276.5" width="2" height="24" fill="#fff" stroke="#008000"/>
<line x1="923.5" y1="251" x2="923.5" y2="279" stroke="#008000" stroke-width="1"/>
<rect x="922.5" y="266.5" width="2" height="10" fill="#fff" stroke="#008000"/>
<line x1="927.5" y1="258" x2="927.5" y2="283" stroke="#ff0000" stroke-width="1"/>
<rect x="926" y="266" width="3" height="9" fill="#ff0000"/>
<line x1="931.5" y1="265" x2="931.5" y2="281" stroke="#008000" stroke-width="1"/>
<rect x="930.5" y="273.5" width="2" height="3" fill="#fff" stroke="#008000"/>
<line x1="935.5" y1="253" x2="935.5" y2="279" stroke="#008000" stroke-width="1"/>
<rect x="934.5" y="265.5" width="2" height="9" fill="#fff" stroke="#008000"/>
<line x1="939.5" y1="246" x2="939.5" y2="267" stroke="#008000" stroke-width="1"/>
<rect x="938.5" y="260.5" width="2" height="5" fill="#fff" stroke="#008000"/>
<line x1="943.5" y1="219" x2="943.5" y2="263" stroke="#008000" stroke-width="1"/>
<rect x="942.5" y="231.5" width="2" height="30" fill="#fff" stroke="#008000"/>
<line x1="947.5" y1="227" x2="947.5" y2="242" stroke="#ff0000" stroke-width="1"/>
<rect x="946" y="230" width="3" height="9" fill="#ff0000"/>
<line x1="951.5" y1="180" x2="951.5" y2="239" stroke="#008000" stroke-width="1"/>
<rect x="950.5" y="185.5" width="2" height="52" fill="#fff" stroke="#008000"/>
<line x1="955.5" y1="156" x2="955.5" y2="187" stroke="#008000" stroke-width="1"/>
<rect x="954.5" y="172.5" width="2" height="13" fill="#fff" stroke="#008000"/>
<line x1="959.5" y1="147" x2="959.5" y2="175" stroke="#ff0000" stroke-width="1"/>
<rect x="958" y="172" width="3" height="3" fill="#ff0000"/>
<line x1="963.5" y1="166" x2="963.5" y2="183" stroke="#008000" stroke-width="1"/>
<rect x="962.5" y="170.5" width="2" height="4" fill="#fff" stroke="#008000"/>
<line x1="967.5" y1="156" x2="967.5" y2="172" stroke="#008000" stroke-width="1"/>
<rect x="966.5" y="170.5" width="2" height="1" fill="#fff" stroke="#008000"/>
<line x1="971.5" y1="147" x2="971.5" y2="173" stroke="#008000" stroke-width="1"/>
<rect x="970.5" y="153.5" width="2" height="16" fill="#fff" stroke="#008000"/>
<line x1="975.5" y1="135" x2="975.5" y2="171" stroke="#ff0000" stroke-width="1"/>
<rect x="974" y="151" width="3" height="16" fill="#ff0000"/>
<line x1="979.5" y1="165" x2="979.5" y2="188" stroke="#ff0000" stroke-width="1"/>
<rect x="978" y="165" width="3" height="4" fill="#ff0000"/>
<line x1="983.5" y1="163" x2="983.5" y2="199" stroke="#ff0000" stroke-width="1"/>
<rect x="982" y="168" width="3" height="25" fill="#ff0000"/>
<line x1="987.5" y1="157" x2="987.5" y2="193" stroke="#008000" stroke-width="1"/>
<rect x="986.5" y="157.5" width="2" height="34" fill="#fff" stroke="#008000"/>
<line x1="991.5" y1="151" x2="991.5" y2="173" stroke="#008000" stroke-width="1"/>
<rect x="990.5" y="154.5" width="2" height="3" fill="#fff" stroke="#008000"/>
<line x1="995.5" y1="154" x2="995.5" y2="173" stroke="#ff0000" stroke-width="1"/>
<rect x="994" y="154" width="3" height="15" fill="#ff0000"/>
<line x1="999.5" y1="148" x2="999.5" y2="177" stroke="#008000" stroke-width="1"/>
<rect x="998.5" y="151.5" width="2" height="15" fill="#fff" stroke="#008000"/>
<line x1="1003.5" y1="135" x2="1003.5" y2="163" stroke="#ff0000" stroke-width="1"/>
<rect x="1002" y="151" width="3" height="6" fill="#ff0000"/>
<line x1="1007.5" y1="124" x2="1007.5" y2="159" stroke="#008000" stroke-width="1"/>
<rect x="1006.5" y="147.5" width="2" height="9" fill="#fff" stroke="#008000"/>
<line x1="1011.5" y1="145" x2="1011.5" y2="164" stroke="#ff0000" stroke-width="1"/>
<rect x="1010" y="147" width="3" height="6" fill="#ff0000"/>
<line x1="1015.5" y1="122" x2="1015.5" y2="156" stroke="#008000" stroke-width="1"/>
<rect x="1014.5" y="123.5" width="2" height="28" fill="#fff" stroke="#008000"/>
<line x1="1019.5" y1="123" x2="1019.5" y2="136" stroke="#ff0000" stroke-width="1"/>
<rect x="1018" y="124" width="3" height="8" fill="#ff0000"/>
<line x1="1023.5" y1="108" x2="1023.5" y2="136" stroke="#008000" stroke-width="1"/>
<rect x="1022.5" y="116.5" width="2" height="14" fill="#fff" stroke="#008000"/>
<line x1="1027.5" y1="114" x2="1027.5" y2="137" stroke="#ff0000" stroke-width="1"/>
<rect x="1026" y="115" width="3" height="12" fill="#ff0000"/>
<line x1="1031.5" y1="121" x2="1031.5" y2="150" stroke="#ff0000" stroke-width="1"/>
<rect x="1030" y="125" width="3" height="15" fill="#ff0000"/>
<line x1="1035.5" y1="132" x2="1035.5" y2="145" stroke="#ff0000" stroke-width="1"/>
<rect x="1034" y="138" width="3" height="6" fill="#ff0000"/>
<line x1="1039.5" y1="111" x2="1039.5" y2="144" stroke="#008000" stroke-width="1"/>
<rect x="1038.5" y="111.5" width="2" height="31" fill="#fff" stroke="#008000"/>
<line x1="1043.5" y1="105" x2="1043.5" y2="125" stroke="#ff0000" stroke-width="1"/>
<rect x="1042" y="112" width="3" height="2" fill="#ff0000"/>
<line x1="1047.5" y1="94" x2="1047.5" y2="124" stroke="#008000" stroke-width="1"/>
<rect x="1046.5" y="104.5" width="2" height="8" fill="#fff" stroke="#008000"/>
<line x1="1051.5" y1="95" x2="1051.5" y2="109" stroke="#ff0000" stroke-width="1"/>
<rect x="1050" y="104" width="3" height="4" fill="#ff0000"/>
<line x1="1055.5" y1="94" x2="1055.5" y2="110" stroke="#008000" stroke-width="1"/>
<rect x="1054.5" y="100.5" width="2" height="6" fill="#fff" stroke="#008000"/>
<line x1="1059.5" y1="86" x2="1059.5" y2="106" stroke="#000" stroke-width="1"/>
<line x1="1058" y1="99.5" x2="1061" y2="99.5" stroke="#000" stroke-width="1"/>
<line x1="1063.5" y1="91" x2="1063.5" y2="105" stroke="#ff0000" stroke-width="1"/>
<rect x="1062" y="98" width="3" height="7" fill="#ff0000"/>
<line x1="1067.5" y1="103" x2="1067.5" y2="111" stroke="#ff0000" stroke-width="1"/>
<rect x="1066" y="104" width="3" height="6" fill="#ff0000"/>
</g>
<polyline points="3.0,187.0 10.0,192.0 20.0,205.0 30.0,225.0 40.0,250.0 50.0,280.0 53.8,290.0 57.5,302.5 61.0,317.5 65.0,333.0 68.0,341.0 71.0,346.5 73.0,342.0 75.9,336.5 78.0,328.0 79.3,325.2 83.4,325.2 87.5,321.1 91.6,319.0 96.8,318.5 103.0,316.0 107.0,311.3 111.2,306.2 115.3,299.0 119.5,291.3 123.6,285.6 127.7,282.5 131.8,278.5 134.1,273.3 138.2,266.1 141.3,263.5 144.4,263.0 147.5,264.0 150.6,262.5 154.7,258.9 157.8,255.3 162.9,250.1 168.1,244.5 171.2,242.9 175.3,242.2 178.4,243.4 183.5,247.0 187.6,246.5 193.8,247.4 199.0,246.5 202.1,247.6 207.2,251.7 211.3,254.6 217.5,248.6 222.6,246.5 226.8,244.0 231.9,237.8 239.1,234.2 243.2,235.7 249.4,238.3 255.6,244.5 262.8,253.7 266.9,261.0 272.0,269.6 277.3,277.5 280.0,283.0 284.5,288.7 288.1,290.5 292.6,287.8 299.7,286.9 306.9,285.1 314.1,283.7 321.3,283.0 326.7,283.7 332.1,286.0 339.2,289.1 342.8,286.0 348.2,282.4 355.4,279.7 360.8,278.9 365.3,280.6 369.8,286.0 375.2,291.4 380.5,293.2 385.9,295.9 391.3,298.6 398.5,299.9 405.7,302.2 412.9,303.1 420.0,303.1 427.2,302.7 434.4,302.2 441.6,303.4 450.0,304.5 460.0,305.8 470.0,306.2 480.0,305.8 490.0,305.0 500.0,303.0 510.0,301.2 520.0,301.8 530.0,301.8 540.0,301.8 552.5,301.5 557.0,301.3 560.6,299.3 564.1,298.4 566.8,295.3 571.2,290.0 576.3,280.3 582.6,265.3 588.9,251.4 594.5,241.4 600.2,234.5 605.2,228.8 610.3,223.8 615.0,221.5 620.0,221.0 625.0,222.0 630.0,225.0 635.0,230.0 639.0,234.5 643.0,236.5 648.0,238.0 654.0,239.0 660.5,239.5 667.0,241.0 673.0,243.3 678.0,244.5 683.0,245.2 687.0,242.0 692.0,239.0 697.0,235.7 700.7,235.0 705.7,237.0 710.8,241.4 715.8,245.8 722.0,249.5 727.0,253.3 735.0,262.5 742.5,273.8 750.0,287.5 757.5,302.5 762.5,313.8 767.5,321.2 770.0,321.7 780.8,321.3 791.5,321.1 805.9,321.7 816.7,322.2 821.2,319.9 823.9,315.4 827.5,308.2 831.9,301.0 836.4,295.7 841.8,288.5 847.2,282.2 852.6,277.7 858.0,275.9 863.4,272.3 867.8,266.9 872.3,263.3 875.9,261.2 881.3,261.9 888.5,263.0 893.9,265.1 897.5,269.6 901.1,272.7 904.6,272.0 910.0,268.7 917.2,266.0 924.4,261.5 931.6,254.4 937.0,249.0 940.0,246.3 943.8,238.8 947.5,222.5 949.8,213.0 955.4,193.0 960.6,175.3 965.7,156.8 969.9,140.3 973.0,130.5 977.5,118.5 980.0,116.5 983.5,114.7 987.0,112.0 990.6,111.2 995.0,112.5 1000.3,108.0 1005.6,106.0 1008.2,106.3 1011.8,109.0 1016.2,109.0 1019.7,113.4 1023.2,111.2 1026.8,115.8 1029.4,116.3 1033.0,116.0 1035.6,115.2 1040.0,108.5 1043.5,104.0 1048.0,98.8 1053.3,91.8 1059.4,85.2 1063.0,86.5 1067.0,84.3" fill="none" stroke="#0000ff" stroke-width="1" shape-rendering="crispEdges"/>
<polyline points="3.0,282.1 5.0,285.5 7.0,289.1 9.0,292.3 11.0,295.5 13.0,298.8 15.0,302.0 17.0,304.8 19.0,307.6 21.0,310.7 23.0,313.8 25.0,316.8 27.0,319.8 29.0,322.5 31.0,325.2 33.0,328.1 35.0,331.0 37.0,333.6 39.0,336.0 41.0,338.6 43.0,341.5 45.0,344.1 47.0,346.5 49.0,348.9 51.0,351.1 53.0,353.1 55.0,355.3 57.0,357.8 59.0,360.9 61.0,363.8 63.0,366.4 65.0,368.5 67.0,369.1 69.0,369.7 71.0,370.9 73.0,370.3 75.0,370.3 77.0,368.3 79.0,365.6 81.0,364.5 83.0,363.6 85.0,362.4 87.0,361.0 89.0,360.2 91.0,359.5 93.0,359.2 95.0,359.0 97.0,358.7 99.0,358.2 101.0,357.7 103.0,357.2 105.0,356.0 107.0,354.8 109.0,353.7 111.0,352.8 113.0,351.4 115.0,349.9 117.0,348.3 119.0,346.7 121.0,345.1 123.0,343.5 125.0,341.9 127.0,340.0 129.0,338.0 131.0,336.0 133.0,334.0 135.0,332.0 137.0,329.1 139.0,326.1 141.0,323.1 143.0,320.3 145.0,317.7 147.0,315.9 149.0,314.4 151.0,312.8 153.0,312.2 155.0,311.5 157.0,310.1 159.0,308.9 161.0,307.0 163.0,304.8 165.0,302.6 167.0,300.6 169.0,298.8 171.0,297.4 173.0,295.4 175.0,293.3 177.0,291.5 179.0,289.0 181.0,287.3 183.0,286.3 185.0,284.7 187.0,283.0 189.0,281.6 191.0,280.5 193.0,279.6 195.0,278.6 197.0,277.4 199.0,276.2 201.0,275.6 203.0,275.2 205.0,275.0 207.0,274.9 209.0,274.8 211.0,274.7 213.0,274.9 215.0,274.9 217.0,275.7 219.0,276.9 221.0,278.0 223.0,278.8 225.0,279.5 227.0,281.1 229.0,282.1 231.0,282.9 233.0,284.1 235.0,285.6 237.0,287.2 239.0,289.6 241.0,291.5 243.0,293.2 245.0,295.0 247.0,296.9 249.0,299.0 251.0,301.3 253.0,303.0 255.0,304.6 257.0,306.0 259.0,307.6 261.0,309.0 263.0,310.4 265.0,312.3 267.0,313.6 269.0,314.9 271.0,316.1 273.0,317.2 275.0,318.3 277.0,318.7 279.0,319.5 281.0,320.4 283.0,321.3 285.0,322.0 287.0,322.2 289.0,322.3 291.0,322.0 293.0,321.7 295.0,321.7 297.0,321.6 299.0,321.5 301.0,321.3 303.0,320.8 305.0,320.2 307.0,319.5 309.0,319.0 311.0,318.1 313.0,317.3 315.0,316.5 317.0,315.9 319.0,315.3 321.0,314.7 323.0,314.3 325.0,313.3 327.0,312.3 329.0,311.5 331.0,310.8 333.0,310.1 335.0,309.6 337.0,309.4 339.0,309.6 341.0,309.4 343.0,309.5 345.0,310.0 347.0,310.5 349.0,310.9 351.0,311.6 353.0,312.2 355.0,312.8 357.0,313.6 359.0,314.3 361.0,315.1 363.0,316.2 365.0,316.9 367.0,318.3 369.0,319.7 371.0,320.9 373.0,322.0 375.0,323.1 377.0,323.6 379.0,323.9 381.0,324.2 383.0,324.7 385.0,325.2 387.0,325.6 389.0,326.1 391.0,326.5 393.0,326.6 395.0,326.7 397.0,326.7 399.0,326.9 401.0,327.1 403.0,327.4 405.0,327.6 407.0,327.8 409.0,327.8 411.0,327.8 413.0,327.7 415.0,327.5 417.0,327.2 419.0,326.9 421.0,326.5 423.0,326.0 425.0,325.6 427.0,325.2 429.0,324.7 431.0,324.3 433.0,323.7 435.0,323.2 437.0,322.6 439.0,321.6 441.0,320.6 443.0,319.8 445.0,319.2 447.0,318.7 449.0,318.6 451.0,318.5 453.0,318.2 455.0,318.0 457.0,317.8 459.0,317.6 461.0,317.4 463.0,317.2 465.0,317.0 467.0,317.2 469.0,317.4 471.0,317.5 473.0,317.6 475.0,317.8 477.0,317.8 479.0,317.8 481.0,317.7 483.0,317.7 485.0,317.7 487.0,317.7 489.0,317.7 491.0,317.6 493.0,317.5 495.0,317.4 497.0,317.2 499.0,317.1 501.0,316.9 503.0,316.8 505.0,316.7 507.0,316.5 509.0,316.3 511.0,316.3 513.0,316.3 515.0,316.4 517.0,316.4 519.0,316.5 521.0,316.5 523.0,316.5 525.0,316.5 527.0,316.8 529.0,317.0 531.0,317.2 533.0,317.5 535.0,317.8 537.0,318.1 539.0,318.4 541.0,318.7 543.0,319.0 545.0,319.3 547.0,319.2 549.0,319.1 551.0,319.0 553.0,318.9 555.0,318.8 557.0,318.6 559.0,318.0 561.0,317.3 563.0,317.0 565.0,316.2 567.0,315.7 569.0,315.2 571.0,314.6 573.0,313.6 575.0,312.8 577.0,311.9 579.0,310.7 581.0,309.3 583.0,307.8 585.0,306.5 587.0,305.1 589.0,303.4 591.0,301.9 593.0,300.5 595.0,299.1 597.0,297.7 599.0,296.2 601.0,294.6 603.0,293.0 605.0,291.4 607.0,289.9 609.0,287.9 611.0,286.1 613.0,284.6 615.0,282.8 617.0,281.3 619.0,279.5 621.0,277.5 623.0,275.7 625.0,273.6 627.0,271.9 629.0,270.2 631.0,268.6 633.0,267.2 635.0,265.8 637.0,264.5 639.0,264.0 641.0,263.2 643.0,263.1 645.0,263.0 647.0,262.8 649.0,262.8 651.0,262.8 653.0,262.8 655.0,262.8 657.0,262.8 659.0,262.8 661.0,262.9 663.0,263.3 665.0,263.7 667.0,264.3 669.0,265.5 671.0,266.7 673.0,267.8 675.0,268.7 677.0,269.6 679.0,270.5 681.0,271.3 683.0,272.2 685.0,272.9 687.0,274.0 689.0,276.0 691.0,277.9 693.0,279.7 695.0,281.6 697.0,283.5 699.0,285.8 701.0,288.1 703.0,290.5 705.0,292.9 707.0,295.6 709.0,297.8 711.0,299.6 713.0,301.5 715.0,303.2 717.0,304.8 719.0,306.2 721.0,307.6 723.0,309.1 725.0,310.5 727.0,311.8 729.0,313.4 731.0,314.9 733.0,316.3 735.0,317.5 737.0,318.6 739.0,319.7 741.0,320.8 743.0,322.0 745.0,323.4 747.0,325.1 749.0,326.7 751.0,328.5 753.0,330.7 755.0,333.0 757.0,335.2 759.0,337.6 761.0,338.5 763.0,339.1 765.0,339.7 767.0,340.9 769.0,341.2 771.0,341.1 773.0,340.8 775.0,340.5 777.0,340.4 779.0,340.3 781.0,340.2 783.0,340.1 785.0,340.0 787.0,339.9 789.0,339.8 791.0,339.8 793.0,339.8 795.0,339.7 797.0,339.8 799.0,339.9 801.0,340.0 803.0,340.1 805.0,340.2 807.0,340.3 809.0,340.3 811.0,340.3 813.0,340.4 815.0,340.4 817.0,340.3 819.0,339.8 821.0,339.2 823.0,337.9 825.0,337.4 827.0,336.8 829.0,336.1 831.0,335.5 833.0,333.7 835.0,331.9 837.0,330.1 839.0,328.5 841.0,327.1 843.0,325.8 845.0,324.5 847.0,323.2 849.0,322.3 851.0,321.2 853.0,320.1 855.0,319.4 857.0,318.7 859.0,317.8 861.0,316.8 863.0,315.7 865.0,314.2 867.0,312.6 869.0,311.3 871.0,309.9 873.0,308.3 875.0,306.9 877.0,305.9 879.0,304.7 881.0,303.2 883.0,301.7 885.0,300.2 887.0,298.7 889.0,297.3 891.0,296.0 893.0,294.7 895.0,293.8 897.0,293.6 899.0,293.1 901.0,293.6 903.0,293.2 905.0,294.2 907.0,295.1 909.0,296.0 911.0,296.6 913.0,296.8 915.0,296.7 917.0,296.6 919.0,296.1 921.0,295.5 923.0,295.4 925.0,294.7 927.0,293.7 929.0,292.7 931.0,292.2 933.0,291.6 935.0,291.0 937.0,290.4 939.0,289.8 941.0,288.7 943.0,287.1 945.0,284.0 947.0,280.0 949.0,278.1 951.0,276.6 953.0,275.4 955.0,273.8 957.0,272.2 959.0,270.5 961.0,267.3 963.0,263.8 965.0,260.4 967.0,257.0 969.0,253.5 971.0,250.4 973.0,246.9 975.0,243.5 977.0,239.7 979.0,237.3 981.0,234.1 983.0,230.3 985.0,226.1 987.0,221.7 989.0,217.5 991.0,213.3 993.0,210.1 995.0,207.1 997.0,203.5 999.0,200.2 1001.0,197.0 1003.0,193.9 1005.0,190.0 1007.0,186.5 1009.0,183.3 1011.0,180.6 1013.0,177.2 1015.0,173.2 1017.0,169.8 1019.0,167.4 1021.0,163.9 1023.0,159.9 1025.0,158.0 1027.0,156.8 1029.0,154.9 1031.0,154.3 1033.0,153.6 1035.0,152.7 1037.0,151.4 1039.0,149.7 1041.0,148.1 1043.0,146.7 1045.0,145.4 1047.0,144.1 1049.0,142.8 1051.0,141.2 1053.0,139.4 1055.0,137.8 1057.0,135.9 1059.0,133.5 1061.0,131.9 1063.0,130.2 1065.0,128.6 1067.0,127.5" fill="none" stroke="#0000ff" stroke-width="1" shape-rendering="crispEdges"/>
<polyline points="3.3,377.3 6.5,387.1 9.8,395.3 14.7,405.0 21.2,414.8 27.7,421.4 35.9,424.9 44.0,423.8 52.2,418.9 58.7,413.2 63.6,406.7 66.9,400.1 68.5,396.9 71.0,395.3 73.4,399.3 75.9,404.2 79.1,405.4 83.2,401.8 88.1,400.1 94.6,399.3 101.1,398.5 107.7,398.2 114.2,400.1 120.0,401.3 124.1,400.2 131.3,392.3 135.4,392.3 138.5,387.9 141.6,381.2 144.7,372.9 147.3,367.3 150.9,363.5 155.0,364.5 159.6,363.5 165.3,357.0 171.5,351.3 174.6,345.1 177.1,340.0 180.0,331.0 185.0,322.5 190.0,315.0 195.0,310.0 200.0,305.0 205.0,300.0 211.0,295.0 215.0,298.8 220.0,307.5 225.0,314.0 230.0,325.0 235.0,335.0 237.4,340.0 239.4,346.2 243.5,351.3 247.6,357.5 250.7,362.6 254.9,365.2 260.0,366.6 265.0,367.0 275.0,362.5 280.0,357.0 287.2,354.3 294.4,356.0 301.5,356.0 308.7,353.4 315.9,348.9 323.1,345.3 328.5,339.0 333.9,332.7 338.3,329.7 341.9,331.8 346.4,337.2 351.8,342.6 357.2,348.0 362.6,352.5 368.0,354.3 376.9,355.2 387.7,354.8 398.5,353.7 409.3,353.0 416.4,351.6 423.6,348.9 430.8,346.2 436.2,343.5 441.6,337.2 446.1,333.6 450.0,332.7 457.5,330.0 465.0,328.0 475.0,329.5 485.0,330.0 495.0,330.8 505.0,331.2 515.0,331.2 525.0,331.2 535.0,333.8 545.0,337.0 555.0,336.2 565.0,335.0 572.5,340.0 580.0,348.8 587.5,355.0 595.0,357.5 600.0,356.2 607.2,352.6 612.6,347.2 618.0,340.0 623.3,329.2 628.7,316.7 633.2,305.9 637.7,295.1 641.3,290.6 646.7,288.0 653.9,286.5 661.0,286.2 666.4,287.1 671.8,291.5 677.2,295.1 682.6,298.7 686.2,304.1 689.8,313.1 693.4,322.1 696.9,331.0 700.5,340.0 704.1,347.2 707.7,354.4 713.1,359.8 718.5,364.3 723.9,368.7 729.3,371.4 734.6,372.7 740.0,370.5 745.4,368.4 750.8,367.5 756.2,368.7 759.8,369.6 761.6,365.2 765.2,361.6 770.0,360.7 775.0,359.5 785.0,358.8 795.0,358.2 805.0,358.8 815.0,358.8 822.5,358.2 827.5,365.0 831.2,368.8 837.5,365.0 850.0,363.8 860.0,360.0 870.0,356.2 877.7,349.9 881.3,344.1 886.7,335.2 892.1,326.2 895.7,319.9 899.3,315.0 902.9,314.0 905.5,317.2 908.2,321.7 911.8,325.8 917.2,327.1 922.0,327.5 922.6,328.4 929.8,328.4 931.0,329.5 947.0,335.4 950.2,342.8 954.0,351.5 959.0,360.3 965.3,361.5 971.6,364.3 975.4,361.5 979.1,357.2 981.7,350.2 984.2,341.5 986.7,332.7 989.2,322.6 991.7,312.5 995.5,300.0 1002.5,282.5 1007.5,265.0 1012.5,247.5 1017.5,227.5 1022.5,210.0 1025.0,202.5 1028.8,193.8 1035.0,190.0 1042.5,188.8 1050.0,188.0 1056.2,185.0 1060.0,180.0 1063.8,172.5 1067.0,170.8" fill="none" stroke="#0000ff" stroke-width="1" shape-rendering="crispEdges"/>
<polyline points="3.0,335.0 7.5,343.8 12.5,350.0 17.5,351.0 22.5,355.5 27.5,357.5 32.5,357.0 37.5,361.0 42.5,362.5 47.5,365.5 52.5,367.0 57.5,367.0 62.5,373.8 67.5,374.5 71.0,367.5 75.0,357.5 80.0,351.0 85.0,350.0 90.0,347.5 95.0,347.5 100.0,348.0 105.0,343.8 110.0,337.5 115.0,330.0 120.0,322.5 125.0,316.0 130.0,313.8 135.0,305.0 142.5,294.0 150.0,294.0 160.0,285.0 170.0,277.5 177.5,272.5 187.5,270.5 200.0,271.0 210.0,275.5 217.5,285.0 225.0,295.0 232.5,307.5 240.0,320.0 250.0,329.5 252.5,330.8 262.5,330.8 270.0,327.5 280.0,323.0 287.5,315.5 295.0,309.5 302.5,308.5 310.0,307.5 315.0,308.5 325.0,308.5 335.0,308.0 340.0,311.0 344.1,318.7 348.2,323.8 355.4,325.9 360.6,331.0 363.7,333.1 374.0,333.6 380.0,332.3 385.0,330.4 390.4,330.0 395.6,327.4 401.8,324.7 408.0,320.2 412.5,317.0 425.0,317.0 435.0,317.5 445.0,316.2 455.0,315.0 460.0,317.5 470.0,320.0 480.0,321.2 490.0,317.5 500.0,313.8 510.0,310.5 520.0,313.8 530.0,315.0 537.5,320.0 545.0,324.5 552.5,325.0 560.0,320.0 565.0,312.5 572.5,302.5 578.0,293.0 581.4,288.0 585.1,282.0 590.2,275.0 595.2,269.6 600.2,267.1 604.0,265.9 607.7,263.4 612.8,260.2 617.8,259.0 622.8,258.3 627.8,257.7 631.6,258.3 635.4,261.5 640.4,266.5 645.4,270.3 650.5,272.8 658.0,272.8 666.8,272.8 671.8,276.6 678.1,280.3 683.1,284.7 686.9,289.1 690.0,294.1 694.1,303.4 698.2,313.7 702.4,320.9 706.5,326.0 710.6,329.1 716.8,331.2 724.0,331.7 731.2,332.2 737.4,332.2 743.5,331.7 748.7,333.2 752.8,336.3 755.9,341.5 760.0,345.6 766.2,346.1 770.3,342.5 776.5,341.0 782.6,340.4 787.8,337.9 794.0,337.9 799.1,338.9 805.3,339.2 813.5,338.4 819.7,337.9 822.8,335.3 825.9,331.2 828.5,326.5 830.0,324.4 834.6,315.4 840.0,308.2 845.4,303.7 852.6,301.4 859.8,300.7 865.2,298.3 870.5,293.9 875.9,290.3 879.5,289.9 883.1,293.0 888.5,292.1 893.9,288.8 897.5,290.6 901.1,294.8 904.6,300.1 909.1,306.1 913.6,307.9 917.2,307.3 920.8,301.0 926.2,293.9 931.6,287.2 934.0,284.9 939.1,279.7 943.2,273.5 946.3,267.4 948.4,261.2 949.8,255.0 953.8,243.8 958.8,225.0 962.5,213.0 967.5,202.5 972.5,192.5 980.0,183.8 983.8,183.8 990.0,175.0 995.0,173.8 1002.5,167.5 1010.0,161.2 1015.0,155.0 1022.5,146.2 1030.0,138.0 1035.0,139.5 1040.0,132.5 1047.5,123.8 1055.0,117.0 1062.5,112.0 1067.5,110.5" fill="none" stroke="#0000ff" stroke-width="2.4" stroke-linejoin="round"/>
<polyline points="3.0,300.5 7.2,304.6 20.6,311.3 27.8,315.5 30.9,315.5 55.6,328.0 65.0,333.8 75.0,333.8 85.0,334.5 95.0,335.0 105.0,335.0 115.0,333.0 125.0,330.0 135.0,327.0 145.0,322.0 155.0,318.8 165.0,315.0 175.0,310.0 185.0,306.0 195.0,302.5 205.0,300.0 212.5,299.5 220.0,300.0 230.0,303.8 240.0,307.0 250.0,309.5 260.0,311.5 270.0,312.0 280.0,312.0 290.0,310.5 300.0,309.5 315.0,309.0 335.0,308.5 340.0,311.2 352.5,315.0 365.0,317.5 377.5,318.8 390.0,319.2 402.5,318.2 415.0,318.0 427.5,318.0 440.0,317.0 452.5,316.2 460.0,316.8 470.0,317.5 480.0,317.5 490.0,317.3 502.5,317.3 515.0,317.5 527.5,317.8 540.0,318.3 552.5,318.5 565.0,317.6 572.5,315.0 580.0,311.2 590.0,306.2 602.5,300.0 615.0,295.0 627.5,290.0 640.0,288.0 652.5,287.0 665.0,286.2 680.0,283.0 687.5,288.8 695.0,293.8 705.0,298.0 717.5,302.0 730.0,305.0 742.5,308.0 755.0,312.5 767.5,317.5 777.2,319.0 784.4,320.4 791.5,322.2 798.7,323.0 805.9,324.0 813.1,324.4 820.3,324.4 827.5,323.5 832.8,322.6 838.2,319.9 845.4,318.1 852.6,316.3 859.8,315.0 867.0,312.7 874.1,311.5 881.3,310.0 888.5,308.8 895.7,307.9 902.9,307.7 910.0,308.2 917.2,307.9 925.0,305.5 935.0,302.0 945.0,297.5 952.5,291.2 960.0,282.5 967.5,272.5 975.0,263.8 985.0,255.0 995.0,246.2 1005.0,238.8 1015.0,228.8 1025.0,218.8 1035.0,211.2 1045.0,202.5 1055.0,193.8 1060.0,188.8 1067.5,182.5" fill="none" stroke="#ff0000" stroke-width="2.4" stroke-linejoin="round"/>
<polygon points="114.8,322.0 124.3,331.5 124.3,338.0 117.4,331.1 117.4,345.6 112.2,345.6 112.2,331.1 105.3,338.0 105.3,331.5" fill="#008000"/>
<polygon points="291.0,295.5 300.5,305.0 300.5,311.5 293.6,304.6 293.6,318.5 288.4,318.5 288.4,304.6 281.5,311.5 281.5,305.0" fill="#008000"/>
<polygon points="411.1,303.3 420.6,312.8 420.6,319.3 413.7,312.4 413.7,328.6 408.5,328.6 408.5,312.4 401.6,319.3 401.6,312.8" fill="#008000"/>
<polygon points="490.8,305.8 500.3,315.3 500.3,321.8 493.4,314.9 493.4,330.8 488.2,330.8 488.2,314.9 481.3,321.8 481.3,315.3" fill="#008000"/>
<polygon points="563.2,313.4 572.7,322.9 572.7,329.4 565.8,322.5 565.8,336.4 560.6,336.4 560.6,322.5 553.7,329.4 553.7,322.9" fill="#008000"/>
<polygon points="831.0,303.6 840.5,313.1 840.5,319.6 833.6,312.7 833.6,326.4 828.4,326.4 828.4,312.7 821.5,319.6 821.5,313.1" fill="#008000"/>
<polygon points="231.5,320.5 240.9,311.1 240.9,304.3 234.1,310.6 234.1,297.0 228.9,297.0 228.9,310.6 222.1,304.3 222.1,311.1" fill="#ff0000"/>
<polygon points="343.3,315.5 352.7,306.1 352.7,299.3 345.9,305.6 345.9,292.0 340.7,292.0 340.7,305.6 333.9,299.3 333.9,306.1" fill="#ff0000"/>
<polygon points="467.5,326.5 476.9,317.1 476.9,310.3 470.1,316.6 470.1,303.0 464.9,303.0 464.9,316.6 458.1,310.3 458.1,317.1" fill="#ff0000"/>
<polygon points="531.0,320.0 540.4,310.6 540.4,303.8 533.6,310.1 533.6,296.5 528.4,296.5 528.4,310.1 521.6,303.8 521.6,310.6" fill="#ff0000"/>
<polygon points="687.0,287.5 696.4,278.1 696.4,271.3 689.6,277.6 689.6,264.0 684.4,264.0 684.4,277.6 677.6,271.3 677.6,278.1" fill="#ff0000"/>
<g shape-rendering="crispEdges">
<line x1="487" y1="23.5" x2="1318" y2="23.5" stroke="#0000ff" stroke-width="1" stroke-dasharray="3 3" stroke-dashoffset="0"/>
<line x1="487" y1="120.5" x2="1318" y2="120.5" stroke="#0000ff" stroke-width="1" stroke-dasharray="3 3" stroke-dashoffset="0"/>
<line x1="487" y1="216.5" x2="1318" y2="216.5" stroke="#0000ff" stroke-width="1" stroke-dasharray="3 3" stroke-dashoffset="0"/>
<line x1="487" y1="312.5" x2="1318" y2="312.5" stroke="#ff00ff" stroke-width="1" stroke-dasharray="3 3" stroke-dashoffset="0"/>
<line x1="487" y1="409.5" x2="1318" y2="409.5" stroke="#ff0000" stroke-width="1" stroke-dasharray="3 3" stroke-dashoffset="0"/>
</g>
<g shape-rendering="crispEdges">
<rect x="927" y="330" width="1" height="2" fill="#000"/>
<rect x="928" y="329" width="6" height="4" fill="#000"/>
<rect x="934" y="328" width="5" height="6" fill="#000"/>
<rect x="939" y="327" width="5" height="8" fill="#000"/>
<rect x="944" y="326" width="3" height="10" fill="#000"/>
<rect x="947" y="328" width="18" height="6" fill="#000"/>
</g>
<polygon points="937.8,331 944.6,329.2 944.6,332.9" fill="#fff"/>
<rect x="941" y="330" width="1" height="2" fill="#0000ff" shape-rendering="crispEdges"/>
<text x="998" y="335.4" font-size="14.5" fill="#000" textLength="59.5" lengthAdjust="spacingAndGlyphs" >BB Signal</text>
<text x="453.2" y="28.9" font-size="15" fill="#000" textLength="16.8" lengthAdjust="spacingAndGlyphs" >R3</text>
<text x="454.5" y="127" font-size="15" fill="#000" textLength="16.8" lengthAdjust="spacingAndGlyphs" >R2</text>
<text x="454.5" y="219.1" font-size="15" fill="#000" textLength="16.8" lengthAdjust="spacingAndGlyphs" >R1</text>
<text x="453.3" y="414.8" font-size="15" fill="#000" textLength="16.8" lengthAdjust="spacingAndGlyphs" >S1</text>
<g shape-rendering="crispEdges">
<line x1="2" y1="2.5" x2="1320" y2="2.5" stroke="#000" stroke-width="1"/>
<line x1="2.5" y1="2" x2="2.5" y2="597" stroke="#000" stroke-width="1"/>
<line x1="1319.5" y1="2" x2="1319.5" y2="597" stroke="#000" stroke-width="1"/>
<line x1="2" y1="483.5" x2="1320" y2="483.5" stroke="#000" stroke-width="1"/>
<line x1="2" y1="485.5" x2="1320" y2="485.5" stroke="#000" stroke-width="1"/>
<line x1="2" y1="543.5" x2="1320" y2="543.5" stroke="#000" stroke-width="1"/>
<line x1="2" y1="545.5" x2="1320" y2="545.5" stroke="#000" stroke-width="1"/>
<line x1="2" y1="596.5" x2="1320" y2="596.5" stroke="#000" stroke-width="1"/>
<rect x="3" y="484" width="1318" height="1" fill="#fff"/>
<rect x="3" y="544" width="1318" height="1" fill="#fff"/>
</g>
<g shape-rendering="crispEdges">
<line x1="4" y1="503.5" x2="1321" y2="503.5" stroke="#c0c0c0" stroke-width="1" stroke-dasharray="3 3" stroke-dashoffset="0"/>
<line x1="4" y1="526.5" x2="1321" y2="526.5" stroke="#c0c0c0" stroke-width="1" stroke-dasharray="3 3" stroke-dashoffset="0"/>
<line x1="4" y1="556.5" x2="1321" y2="556.5" stroke="#c0c0c0" stroke-width="1" stroke-dasharray="3 3" stroke-dashoffset="0"/>
<line x1="4" y1="586.5" x2="1321" y2="586.5" stroke="#c0c0c0" stroke-width="1" stroke-dasharray="3 3" stroke-dashoffset="0"/>
</g>
<text x="7" y="499" font-size="10.2" fill="#000" textLength="33.5" lengthAdjust="spacingAndGlyphs" >DTOSC</text>
<text x="43.5" y="499" font-size="10.2" fill="#000" textLength="39.5" lengthAdjust="spacingAndGlyphs" >(13,8,5,3)</text>
<text x="86" y="499" font-size="10.2" fill="#000" textLength="32.5" lengthAdjust="spacingAndGlyphs" >68.5262</text>
<text x="121.5" y="499" font-size="10.2" fill="#000" textLength="33.5" lengthAdjust="spacingAndGlyphs" >77.6907</text>
<text x="162.7" y="499" font-size="10.2" fill="#000" textLength="39.5" lengthAdjust="spacingAndGlyphs" >Stochastic</text>
<text x="206" y="499" font-size="10.2" fill="#000" textLength="142.5" lengthAdjust="spacingAndGlyphs" >(50,10,10,SMA,Close/Close,80,20)</text>
<text x="352.6" y="499" font-size="10.2" fill="#000" textLength="32.2" lengthAdjust="spacingAndGlyphs" >96.2264</text>
<text x="388.5" y="499" font-size="10.2" fill="#000" textLength="32.8" lengthAdjust="spacingAndGlyphs" >95.7598</text>
<polyline points="3.3,508.3 10.0,515.0 16.7,520.0 23.3,525.0 30.0,529.2 36.7,532.5 43.3,533.7 50.0,534.2 56.7,534.2 63.3,533.7 70.0,533.7 76.7,533.7 83.3,533.0 90.0,531.7 96.7,529.2 103.3,526.7 110.0,523.3 116.7,520.0 123.3,515.8 130.0,510.8 136.7,505.8 143.3,501.7 150.0,498.3 158.0,494.5 166.0,492.5 175.0,491.3 185.0,490.8 195.0,490.3 205.0,490.5 212.0,492.0 220.0,495.5 228.0,499.0 237.0,502.5 243.7,510.0 250.3,516.7 257.0,523.3 263.7,529.2 270.3,533.3 277.0,535.0 283.7,535.0 290.3,534.2 297.0,532.0 303.7,528.7 310.3,525.0 317.0,521.0 323.7,517.5 330.3,515.3 337.0,514.2 343.7,514.5 350.3,515.3 357.0,516.7 363.7,518.7 370.3,522.0 377.0,525.3 383.7,528.0 390.3,529.5 397.0,530.3 403.7,529.7 410.3,528.3 417.0,525.0 423.7,521.7 430.3,517.5 437.0,514.2 443.7,511.0 450.3,508.0 454.0,506.7 458.0,504.0 464.0,503.3 474.0,503.3 484.0,503.7 494.0,505.0 504.0,505.8 510.7,505.0 517.3,503.3 524.0,501.3 530.7,500.8 537.3,501.7 544.0,504.2 550.7,508.3 557.3,513.3 564.0,517.5 570.7,519.7 577.3,519.2 584.0,515.8 590.7,510.8 597.3,505.0 604.0,498.3 610.7,493.3 617.3,490.3 624.0,489.2 630.7,489.2 637.3,489.7 644.0,491.3 650.7,493.3 657.3,495.8 664.0,498.0 670.7,500.0 677.3,502.5 681.0,504.2 687.7,506.7 694.3,510.8 701.0,515.8 707.7,521.7 714.3,527.5 721.0,531.7 727.7,535.0 734.3,536.7 741.0,537.5 747.7,537.2 754.3,536.3 761.0,535.8 767.7,535.3 774.3,534.7 781.0,533.7 787.7,532.5 794.3,530.8 801.0,529.2 807.7,527.5 814.3,525.3 821.0,522.5 827.7,519.2 834.3,515.0 839.3,511.7 844.3,506.7 849.3,502.5 854.3,498.3 859.3,495.0 864.3,493.3 871.0,492.0 877.7,491.7 884.3,491.7 891.0,492.0 897.7,493.0 904.3,493.7 908.0,494.7 913.0,496.7 918.0,499.7 924.7,502.5 931.3,504.7 938.0,505.3 944.7,504.7 951.3,502.5 958.0,499.2 964.7,495.8 971.3,492.5 976.3,490.0 981.3,488.7 991.3,488.3 1001.3,488.3 1020.0,488.8 1040.0,488.5 1067.0,489.0" fill="none" stroke="#707070" stroke-width="1" stroke-dasharray="5 4" shape-rendering="crispEdges"/>
<polyline points="3.3,522.5 7.5,525.8 11.7,530.8" fill="none" stroke="#707070" stroke-width="1" shape-rendering="crispEdges"/>
<polyline points="75.8,533.0 83.3,530.0 90.0,526.7 96.7,524.2 103.3,520.0 110.0,515.0 116.7,508.3 123.3,502.5 128.3,499.2 131.7,498.0" fill="none" stroke="#707070" stroke-width="1" shape-rendering="crispEdges"/>
<polyline points="214.2,496.7 220.0,501.7 227.0,509.2 232.0,515.8 237.0,521.7 240.3,525.0 243.7,527.5" fill="none" stroke="#707070" stroke-width="1" shape-rendering="crispEdges"/>
<polyline points="279.5,532.5 283.7,530.0 287.0,526.7 290.3,523.3 293.7,520.8 297.0,519.2 302.0,518.3 307.0,517.0 312.0,515.3 317.0,514.7 323.7,513.7 330.3,513.3 337.0,513.8 342.0,515.0 347.0,518.3 352.0,520.8 357.0,523.3 362.0,526.7 365.3,529.2" fill="none" stroke="#707070" stroke-width="1" shape-rendering="crispEdges"/>
<polyline points="387.8,532.5 393.7,530.0 400.3,525.8 407.0,521.7 413.7,516.7 420.3,513.3 427.0,510.8 433.7,508.3 440.3,505.0 447.0,502.0 454.0,501.7 460.7,503.3 467.3,503.3 474.0,505.0 480.7,506.3 487.3,506.7 494.0,506.3 500.7,505.0 504.0,502.5 507.3,500.0" fill="none" stroke="#707070" stroke-width="1" shape-rendering="crispEdges"/>
<polyline points="519.8,497.5 524.0,499.2 529.0,503.3 534.0,509.2 539.0,515.8 544.0,521.7 549.0,525.0 554.0,525.8 559.0,525.0 564.0,521.7 569.0,515.8 572.3,510.8 575.7,505.0 579.0,500.3" fill="none" stroke="#707070" stroke-width="1" shape-rendering="crispEdges"/>
<polyline points="644.0,496.3 650.7,499.7 657.3,501.7 664.0,504.2 670.7,507.5 677.3,510.0 681.0,510.8 686.0,515.0 691.0,520.0 696.0,525.8 699.3,529.2" fill="none" stroke="#707070" stroke-width="1" shape-rendering="crispEdges"/>
<polyline points="779.3,532.0 784.3,530.0 789.3,527.5 794.3,525.0 801.0,522.5 807.7,520.0 814.3,517.0 819.3,515.0 822.7,511.7 827.7,506.7 831.0,502.5 834.3,498.7" fill="none" stroke="#707070" stroke-width="1" shape-rendering="crispEdges"/>
<polyline points="899.3,495.3 904.3,500.0 908.0,503.3 911.3,506.7 915.5,509.7 921.3,507.5 928.0,505.3 934.7,504.2 939.7,502.5 943.0,498.0" fill="none" stroke="#707070" stroke-width="1" shape-rendering="crispEdges"/>
<polyline points="11.7,531.7 15.0,533.0 20.0,534.2 25.0,535.5 30.0,535.3 35.0,534.7 40.0,533.7 45.0,533.0 50.0,533.3 55.0,533.7 60.0,533.7 66.7,533.7 71.7,533.7 75.8,533.0" fill="none" stroke="#ff0000" stroke-width="2" />
<polyline points="131.7,499.2 135.0,495.8 138.3,492.5 141.7,490.3 146.7,490.3 153.3,491.7 160.0,491.7 166.7,491.3 173.3,490.3 180.0,490.8 185.0,490.0 189.2,488.7 193.3,489.7 200.0,490.3 205.0,491.3 210.0,493.3 214.2,496.7" fill="none" stroke="#00ff00" stroke-width="2" />
<polyline points="243.7,527.5 247.0,531.7 250.3,535.8 253.7,538.3 260.3,538.7 265.3,538.0 270.3,535.8 275.3,534.2 279.5,532.5" fill="none" stroke="#ff0000" stroke-width="2" />
<polyline points="365.3,529.2 368.7,530.8 372.0,532.5 375.3,534.2 378.7,534.7 382.0,534.2 385.3,533.0 387.8,532.5" fill="none" stroke="#ff0000" stroke-width="2" />
<polyline points="507.3,500.0 511.5,498.3 515.7,497.5 519.8,497.5" fill="none" stroke="#00ff00" stroke-width="2" />
<polyline points="579.0,500.3 583.2,495.8 587.3,491.7 592.3,489.2 597.3,488.0 604.0,487.8 610.7,488.0 617.3,489.2 624.0,490.8 630.7,491.7 637.3,493.7 644.0,496.3" fill="none" stroke="#00ff00" stroke-width="2" />
<polyline points="699.3,529.2 702.7,532.5 706.0,535.8 708.5,538.3 714.3,538.8 722.7,538.3 731.0,536.7 737.7,535.3 744.3,534.2 751.0,534.2 757.7,534.7 764.3,534.7 771.0,533.7 776.0,532.5 779.3,532.0" fill="none" stroke="#ff0000" stroke-width="2" />
<polyline points="834.3,498.7 837.7,495.0 841.0,492.5 846.0,490.8 852.7,490.3 859.3,491.3 866.0,491.3 874.3,491.3 881.0,493.3 887.7,493.7 894.3,494.2 899.3,495.3" fill="none" stroke="#00ff00" stroke-width="2" />
<polyline points="943.0,498.0 947.2,495.8 950.5,491.7 953.8,489.2 958.0,488.0 964.7,487.8 971.3,487.5 978.0,488.0 984.7,488.7 991.3,489.7 998.0,489.7 1004.7,489.7 1011.3,489.7 1018.0,488.7 1024.7,488.0 1031.3,488.0 1038.0,488.7 1044.7,488.7 1051.3,488.7 1058.0,488.7 1067.7,488.7" fill="none" stroke="#00ff00" stroke-width="2" />
<polyline points="3.3,540.0 8.3,537.5 12.5,531.7 16.7,521.7 21.7,510.0 26.7,500.8 31.7,495.8 36.7,495.0 40.8,496.7 45.0,501.7 48.3,509.2 50.8,515.8 54.2,515.0 57.5,520.0 60.8,524.2 64.2,526.7 66.7,521.7 69.2,515.0 71.7,510.8 75.0,510.0 78.3,505.0 81.7,498.3 85.0,496.7 88.3,497.5 91.7,500.8 95.0,507.5 98.3,513.3 101.7,517.5 105.0,518.3 108.3,515.0 111.7,511.7 115.0,505.0 118.3,496.7 121.7,490.8 124.2,490.0 126.7,492.5 130.0,495.0 133.3,496.7 136.7,500.0 141.7,500.0 145.0,504.2 150.0,510.0 155.0,515.8 160.0,520.0 163.3,521.7 166.7,517.5 170.0,511.7 173.3,507.5 176.7,504.2 179.2,503.3 181.7,507.5 183.3,510.0 187.5,510.0 190.0,513.3 193.3,521.7 196.7,528.3 200.0,530.0 203.3,531.7 206.7,537.5 211.7,538.3 216.7,540.8 221.7,542.0 227.0,542.0 240.3,541.7 243.7,535.8 248.7,530.8 252.0,527.5 255.3,516.7 258.7,507.5 262.0,503.3 265.3,496.7 268.7,490.0 272.0,488.0 275.3,488.0 277.0,489.2 290.3,488.3 295.3,489.2 297.8,496.7 300.3,505.0 302.8,511.7 305.3,515.8 308.7,523.3 312.0,528.3 315.3,534.2 318.7,534.2 322.0,530.0 325.3,527.5 328.7,523.3 332.0,519.2 335.3,515.8 337.8,515.0 340.3,517.5 343.7,524.2 347.0,529.2 350.3,532.0 353.7,532.5 357.0,530.0 360.3,529.2 363.7,527.5 367.0,520.8 370.3,514.2 373.7,510.0 377.0,505.0 380.3,495.8 383.7,490.8 387.0,490.0 393.7,490.0 400.3,489.2 407.0,488.3 410.3,487.0 413.7,489.2 417.0,491.7 419.5,496.7 422.0,503.3 424.5,511.7 427.0,520.0 429.5,527.5 432.0,532.0 437.0,532.5 440.3,528.3 443.7,520.8 447.0,513.3 450.3,505.0 454.0,502.5 457.3,506.7 460.7,515.0 464.0,522.5 467.3,529.2 471.5,534.7 476.5,534.7 479.0,530.0 482.3,521.7 485.7,513.3 489.0,506.7 492.3,500.8 495.7,495.0 499.0,489.7 502.3,488.8 507.3,488.8 509.8,495.0 512.3,501.7 514.8,508.3 518.2,515.8 521.5,523.3 524.8,530.0 527.3,534.7 532.3,534.7 537.3,535.8 542.3,536.7 546.5,540.3 549.0,536.7 551.5,528.3 554.0,520.8 556.5,513.3 559.0,506.7 561.5,500.8 564.0,495.0 566.5,489.2 568.2,487.2 575.7,487.0 595.7,487.0 598.2,491.7 600.7,500.0 603.2,506.7 605.7,512.5 609.0,519.2 612.3,526.7 614.8,533.0 617.3,533.7 622.3,533.7 625.7,536.7 629.0,539.7 634.0,540.8 639.0,541.7 645.7,540.8 650.7,538.3 654.0,535.8 657.3,531.7 660.7,525.0 664.0,518.3 666.5,515.8 670.7,516.3 675.7,519.2 681.0,524.2 683.5,531.7 686.8,536.7 691.0,538.3 695.2,540.8 699.3,541.7 704.3,539.2 708.5,535.8 711.8,530.0 714.3,523.3 716.8,516.7 719.3,510.8 722.7,503.3 726.0,496.7 729.3,491.7 732.7,490.8 739.3,490.8 744.3,492.5 747.7,495.0 750.2,501.7 752.7,508.3 756.0,515.8 759.3,520.5 764.3,520.5 766.8,517.5 769.3,510.8 771.8,503.3 774.3,497.5 777.7,493.3 781.0,490.3 785.2,488.7 788.5,490.0 791.8,493.3 795.2,498.3 798.5,505.0 801.8,507.5 806.0,509.2 811.0,510.8 813.5,508.3 816.0,501.7 818.5,496.7 821.0,494.7 824.3,493.0 827.7,491.7 831.0,490.3 836.0,490.0 841.0,488.7 844.3,490.8 847.7,495.0 851.0,501.7 854.3,509.2 857.7,516.7 861.0,522.5 864.3,525.0 867.7,524.2 871.0,520.0 874.3,515.0 877.7,514.2 881.0,515.8 884.3,520.8 887.7,523.7 891.0,522.5 894.3,528.3 899.3,528.7 904.3,531.7 908.0,534.2 910.5,539.2 913.8,539.2 916.3,535.0 918.8,527.5 921.3,520.8 924.7,513.3 928.0,505.8 930.5,500.0 933.0,495.0 935.5,491.3 943.0,490.3 949.7,490.0 958.0,489.7 966.3,489.7 973.8,490.3 976.3,494.2 978.8,501.7 981.3,508.3 983.8,515.0 987.2,520.8 990.5,526.7 993.8,530.8 996.3,531.7 999.7,528.3 1003.0,525.0 1007.2,523.0 1010.5,523.3 1013.0,517.5 1015.5,512.5 1018.0,510.0 1020.5,507.5 1023.0,502.5 1025.5,505.0 1028.8,508.3 1032.2,515.8 1034.7,521.7 1039.7,521.7 1042.2,524.7 1044.7,524.2 1048.0,520.0 1051.3,512.5 1053.8,505.0 1055.5,500.8 1058.8,497.5 1062.2,495.8 1064.7,498.3 1067.2,504.2" fill="none" stroke="#ff0000" stroke-width="2" stroke-linejoin="round"/>
<polyline points="3.3,540.8 8.3,539.2 11.7,536.7 15.0,531.7 18.3,525.0 21.7,517.5 25.0,510.0 28.3,502.5 32.5,496.7 36.7,495.3 40.8,495.8 44.2,499.2 47.5,503.3 50.8,508.3 55.0,513.3 59.2,517.5 63.3,521.7 66.7,523.0 70.0,520.8 73.3,516.7 76.7,512.5 80.0,507.5 83.3,502.5 86.7,499.2 90.0,498.3 93.3,500.8 96.7,505.8 100.0,510.8 103.3,515.0 106.7,516.7 110.8,515.8 114.2,511.7 117.5,505.8 120.8,499.2 124.2,494.2 127.5,493.3 131.7,496.7 136.7,499.2 141.7,500.0 146.7,502.5 151.7,506.7 156.7,512.5 160.8,517.5 164.2,519.2 168.3,518.3 173.3,514.2 178.3,509.2 181.7,506.3 186.7,506.7 190.0,510.0 194.2,515.8 198.3,523.3 203.3,530.0 208.3,534.2 213.3,537.5 218.3,540.3 223.3,541.7 227.0,542.0 240.3,542.0 245.3,538.3 250.3,533.3 253.7,528.3 257.0,521.7 260.3,515.0 263.7,508.3 267.0,501.7 270.3,495.8 273.7,490.8 277.0,488.7 283.7,488.3 293.7,488.3 297.0,490.8 300.3,496.7 303.7,504.2 307.0,511.7 310.3,518.3 313.7,525.8 317.0,530.8 319.5,533.0 323.7,531.7 327.0,529.2 330.3,525.0 333.7,520.8 337.0,517.5 340.3,516.3 343.7,517.5 347.0,522.5 350.3,527.5 353.7,530.8 357.0,532.0 360.3,532.0 363.7,530.0 367.0,526.7 370.3,521.7 373.7,515.8 377.0,510.0 380.3,504.2 383.7,498.3 387.0,493.3 390.3,490.3 397.0,489.2 403.7,488.7 410.3,488.3 415.3,488.7 418.7,491.7 422.0,498.3 425.3,506.7 428.7,515.8 432.0,523.3 435.3,529.2 438.7,532.0 442.0,530.0 445.3,525.0 448.7,518.3 452.0,510.8 454.0,509.5 457.3,506.7 460.7,506.7 464.0,512.5 467.3,519.2 470.7,525.0 474.0,530.0 477.3,533.3 480.7,533.3 484.0,529.2 487.3,522.5 490.7,515.0 494.0,508.3 497.3,501.7 500.7,495.8 504.0,491.7 507.3,490.3 510.7,492.5 514.0,498.3 517.3,505.0 520.7,512.5 524.0,520.0 527.3,526.7 530.7,530.8 534.0,533.7 539.0,535.0 544.0,536.7 547.3,538.0 550.7,536.7 554.0,530.0 556.5,523.3 559.0,516.7 561.5,510.0 564.0,503.3 566.5,497.5 569.0,492.5 572.3,489.2 575.7,487.5 584.0,487.0 599.0,487.5 601.5,492.5 604.0,498.3 606.5,505.0 609.0,510.8 612.3,518.3 615.7,525.0 619.0,530.0 622.3,533.7 627.3,535.8 632.3,538.3 637.3,540.3 642.3,541.7 647.3,541.3 652.3,539.7 657.3,535.8 662.3,529.2 665.7,523.3 669.0,519.2 672.3,517.5 676.5,518.7 681.0,520.0 684.3,525.8 687.7,531.7 691.0,535.8 695.2,538.7 699.3,540.3 706.0,540.3 710.2,537.5 713.5,531.7 716.8,524.2 720.2,515.8 723.5,508.3 726.8,501.7 730.2,496.7 734.3,492.5 738.5,491.3 743.5,491.3 747.7,493.0 751.0,498.3 754.3,505.0 757.7,511.7 761.0,517.5 764.3,519.2 767.7,518.7 771.0,515.0 774.3,508.3 777.7,501.7 781.0,496.7 784.3,493.0 788.5,490.8 791.8,491.7 795.2,494.2 798.5,498.3 801.8,502.5 806.0,506.7 810.2,509.2 814.3,508.7 817.7,505.0 821.0,500.0 824.3,495.8 827.7,493.3 831.0,491.7 836.0,490.8 841.0,490.3 846.0,490.8 849.3,493.3 852.7,497.5 856.0,503.3 859.3,510.8 862.7,517.5 866.0,522.5 869.3,524.2 872.7,522.5 876.0,519.2 879.3,516.7 882.7,516.3 886.0,518.7 889.3,521.3 894.3,525.0 899.3,527.5 904.3,529.7 908.0,532.5 911.3,535.0 914.7,537.0 918.0,535.8 921.3,530.0 924.7,522.5 928.0,515.0 931.3,507.5 934.7,500.8 938.0,495.8 941.3,492.5 945.5,491.3 951.3,490.8 958.0,490.3 966.3,489.7 974.7,490.0 978.0,494.2 981.3,500.8 984.7,507.5 988.0,514.2 991.3,520.8 994.7,526.7 998.0,529.7 1002.2,529.7 1006.3,527.5 1010.5,524.7 1014.7,520.0 1018.8,515.8 1022.2,510.8 1024.7,507.5 1028.0,505.8 1031.3,506.7 1034.7,512.5 1038.8,518.3 1042.2,522.5 1045.5,523.0 1049.7,520.8 1053.0,515.8 1056.3,509.2 1059.7,502.5 1063.0,499.2 1067.2,499.2" fill="none" stroke="#0000ff" stroke-width="2" stroke-linejoin="round"/>
<text x="7.5" y="558.8" font-size="10.2" fill="#000" textLength="114.5" lengthAdjust="spacingAndGlyphs" >DSS(3,21) 58.2713 82.5329</text>
<polyline points="3.3,595.0 8.3,593.0 13.3,589.7 18.3,585.8 23.3,583.3 28.3,581.7 33.3,581.3 38.3,580.8 41.7,578.3 45.0,577.0 48.3,575.8 51.7,571.7 55.0,564.2 57.5,560.3 60.0,559.5 63.3,564.2 66.7,565.8 70.0,560.0 74.2,551.7 78.3,549.2 83.3,549.7 90.0,550.0 96.7,551.7 100.0,554.2 105.0,556.7 108.3,550.0 113.3,548.3 120.0,547.2 126.7,547.5 133.3,548.0 140.0,547.2 143.3,547.5 146.7,550.8 151.7,555.8 158.3,559.2 163.3,555.8 168.3,551.7 173.3,549.2 178.3,548.0 181.7,550.8 185.0,553.3 187.5,554.2 190.0,556.7 191.7,566.7 194.2,576.7 197.5,584.2 201.7,590.0 206.7,593.3 211.7,595.0 216.7,595.3 227.0,595.3 238.7,595.0 243.7,593.0 252.0,591.7 258.7,590.0 263.7,585.0 268.7,580.8 275.3,575.8 279.5,574.2 282.8,567.5 287.0,558.3 291.2,551.7 294.5,549.5 297.8,550.8 302.8,554.2 308.7,554.7 313.7,556.3 319.5,558.8 325.3,558.0 331.2,557.2 335.3,559.2 339.5,564.2 342.0,571.7 344.5,580.0 347.8,585.8 352.0,589.2 357.0,591.7 362.0,594.2 367.0,592.5 372.0,590.0 375.3,588.3 378.7,583.3 382.8,577.5 387.8,574.2 391.2,570.0 394.5,563.3 398.7,555.0 403.7,550.0 408.7,547.8 413.7,547.8 420.3,549.7 427.0,553.0 433.7,557.2 438.7,555.8 443.7,553.7 448.7,553.0 454.0,554.7 456.5,557.5 459.0,563.3 462.3,570.8 465.7,580.0 469.0,587.5 472.3,590.8 475.7,593.3 479.0,594.2 481.5,589.2 484.0,581.7 487.3,574.2 490.7,568.3 494.0,560.8 497.3,555.0 500.7,550.8 504.0,548.7 507.3,548.0 510.7,550.3 514.0,556.7 517.3,563.3 520.7,566.7 524.0,568.3 527.3,570.0 530.7,576.7 534.0,583.3 537.3,587.5 540.7,590.8 544.0,593.3 547.0,594.2 549.8,590.8 554.0,585.8 558.2,580.0 562.3,572.5 566.5,564.2 570.7,557.5 574.8,553.3 579.0,549.7 584.0,548.0 590.7,547.5 596.5,547.5 600.7,549.2 604.0,550.3 609.0,549.7 614.0,550.3 620.7,550.8 627.3,551.3 630.7,553.0 634.8,556.7 637.3,563.3 639.8,571.7 642.3,580.0 645.7,587.5 649.8,590.8 654.0,593.3 658.2,594.7 662.3,593.7 667.3,593.3 672.3,594.2 677.3,595.0 681.0,595.3 691.0,594.7 697.7,594.2 704.3,593.3 710.2,590.8 716.0,588.3 721.0,584.2 724.3,580.0 727.7,577.5 731.0,573.3 736.0,571.7 739.3,567.5 742.7,565.3 747.7,565.0 751.0,564.7 753.5,570.8 756.0,576.7 759.3,580.0 762.7,576.7 765.2,570.0 767.7,561.7 771.0,555.8 774.3,552.0 777.7,549.7 781.0,548.7 786.0,547.5 792.7,547.5 796.0,549.2 799.3,552.0 802.7,553.3 807.7,552.0 814.3,550.8 819.3,550.0 824.3,548.0 831.0,547.5 841.0,547.5 845.2,549.2 849.3,552.5 852.7,556.7 856.0,563.3 859.3,569.2 862.7,570.0 866.0,565.8 869.3,562.5 875.2,559.7 878.5,563.3 881.0,570.8 884.3,578.3 887.7,581.7 891.8,578.3 894.3,580.0 897.7,586.7 901.0,590.0 904.3,592.5 908.0,593.7 911.3,594.7 914.7,592.5 917.2,588.3 919.7,581.7 923.0,574.2 926.3,567.5 930.5,563.0 934.7,559.2 938.8,555.0 942.2,552.0 946.3,550.3 950.5,548.3 954.7,547.5 958.0,548.0 964.7,548.3 969.7,547.5 973.8,547.8 978.0,549.7 983.0,553.0 988.0,553.0 991.3,552.2 994.7,553.0 998.8,554.7 1003.0,557.5 1007.2,560.8 1011.3,565.3 1014.7,560.0 1018.8,554.2 1023.0,550.3 1027.2,554.7 1029.7,563.3 1032.2,572.5 1035.5,582.0 1038.8,575.0 1042.2,568.3 1046.3,564.2 1051.3,560.8 1055.5,557.2 1059.7,557.5 1063.0,560.8 1066.3,566.3" fill="none" stroke="#ff0000" stroke-width="1" shape-rendering="crispEdges"/>
<polyline points="3.3,593.0 6.7,588.3 10.0,585.8 15.0,584.7 20.0,583.7 25.0,584.2 29.2,582.5 31.7,580.8 35.0,582.5 40.0,583.7 45.0,583.7 50.0,583.7 53.3,583.0 55.8,581.7 58.3,583.7 61.7,585.3 64.2,587.5 66.7,588.3 69.2,583.3 71.7,575.8 74.2,566.7 75.8,562.5 79.2,560.8 83.3,562.5 90.0,561.7 95.0,564.2 99.2,567.0 103.3,563.3 108.3,558.3 113.3,555.0 120.0,552.5 123.3,551.7 126.7,553.3 133.3,551.7 141.7,550.0 145.0,551.7 148.3,555.0 151.7,557.0 156.7,555.8 161.7,553.3 166.7,551.7 170.0,552.5 175.0,550.8 180.0,551.3 183.3,553.3 186.7,551.3 190.0,555.8 195.0,558.3 198.3,557.5 201.7,561.7 206.7,565.0 210.8,566.7 213.3,572.5 216.7,580.0 220.0,585.0 223.3,588.3 227.0,590.0 233.7,593.0 238.7,594.2 243.7,591.7 252.0,590.8 258.7,588.3 262.8,584.2 267.0,580.8 271.2,579.2 275.3,576.7 279.5,575.8 283.7,570.8 287.8,564.2 291.2,558.3 294.5,558.3 298.7,562.5 302.8,565.8 307.0,563.3 311.2,564.7 315.3,568.0 320.3,565.8 326.2,565.0 331.2,564.5 335.3,566.7 339.5,571.7 342.8,580.0 346.2,585.8 348.7,586.7 354.5,584.2 358.7,587.5 362.8,590.0 367.8,586.7 371.2,585.3 375.3,585.3 379.5,580.0 383.7,575.8 387.8,575.3 392.0,573.3 395.3,568.3 400.3,563.3 404.5,560.0 407.8,556.7 411.2,554.7 415.3,556.2 421.2,558.3 426.2,560.8 431.2,563.8 435.3,562.0 440.3,560.0 444.5,558.0 448.7,558.7 454.0,560.0 457.3,566.7 460.7,570.0 464.0,575.8 467.3,581.7 470.7,583.3 475.7,583.3 479.0,584.2 481.5,577.5 484.0,570.0 487.3,565.0 490.7,563.3 494.0,559.2 497.3,555.8 502.3,554.2 507.3,551.3 510.7,555.0 514.0,562.5 516.5,566.7 519.8,569.2 524.0,569.2 526.5,568.3 529.0,573.3 532.3,579.2 535.7,582.5 539.0,584.2 544.0,584.7 547.0,586.3 549.8,580.0 554.0,575.0 558.2,570.8 562.3,564.2 566.5,557.5 570.7,553.0 574.8,551.7 579.0,549.2 584.0,550.3 590.7,550.3 594.8,549.2 598.2,550.8 602.3,553.3 606.5,552.0 610.7,551.3 615.7,552.5 620.7,552.5 625.7,553.3 630.7,554.7 634.8,556.3 638.2,562.5 642.3,568.3 645.7,570.8 650.7,577.0 654.8,577.5 658.2,578.3 663.2,575.0 666.5,577.0 670.7,583.7 675.7,585.3 681.0,587.5 686.0,590.0 691.0,592.0 696.0,589.2 699.3,590.0 704.3,589.2 707.7,589.2 714.3,585.3 719.3,585.0 724.3,583.3 734.3,583.3 739.3,580.8 744.3,580.8 749.3,583.0 752.7,585.8 756.0,590.0 759.3,588.7 764.3,585.3 767.7,581.7 771.0,575.0 775.2,569.2 779.3,567.0 782.7,563.3 786.0,560.8 791.0,560.3 796.0,561.7 799.3,566.3 802.7,564.2 807.7,562.5 811.0,563.3 814.3,561.7 819.3,560.8 822.7,556.7 826.0,553.3 830.2,550.8 836.0,550.3 839.3,549.2 842.7,549.7 847.7,552.5 852.7,555.8 856.0,557.2 859.3,559.2 862.7,557.5 867.7,553.3 871.0,553.0 874.3,552.0 878.5,555.8 882.7,561.3 886.8,560.0 891.8,556.2 895.2,558.0 898.5,562.5 901.8,570.0 905.2,575.8 908.0,578.7 911.3,582.0 914.7,579.2 917.2,573.3 919.7,566.7 923.0,561.7 926.3,560.3 930.5,559.7 934.7,556.7 938.8,554.7 943.0,553.3 947.2,553.0 951.3,551.3 956.3,551.3 959.7,552.2 966.3,552.2 971.3,550.3 975.5,552.0 979.7,553.3 983.8,555.8 988.0,554.2 992.2,553.3 994.7,554.2 998.8,552.5 1004.7,553.0 1008.8,553.3 1011.3,554.2 1016.3,551.3 1023.0,549.5 1027.2,551.7 1032.2,556.7 1035.5,560.3 1038.8,555.0 1042.2,552.5 1048.0,552.2 1052.2,552.0 1055.5,551.2 1059.7,552.0 1063.8,553.3 1066.3,554.2" fill="none" stroke="#000080" stroke-width="1" shape-rendering="crispEdges"/>
<text x="5" y="592" font-size="10.8" fill="#000" textLength="57.5" lengthAdjust="spacingAndGlyphs" >Metatrader,</text>
<text x="67" y="592" font-size="10.8" fill="#000" textLength="10" lengthAdjust="spacingAndGlyphs" >©</text>
<text x="80.5" y="592" font-size="10.8" fill="#000" textLength="54.5" lengthAdjust="spacingAndGlyphs" >2001-2012,</text>
<text x="137.8" y="592" font-size="10.8" fill="#000" textLength="58.5" lengthAdjust="spacingAndGlyphs" >MetaQuotes</text>
<text x="200.5" y="592" font-size="10.8" fill="#000" textLength="43.5" lengthAdjust="spacingAndGlyphs" >Software</text>
<text x="247" y="592" font-size="10.8" fill="#000" textLength="26.5" lengthAdjust="spacingAndGlyphs" >Corp.</text>
<g shape-rendering="crispEdges">
<line x1="1320" y1="6.5" x2="1322" y2="6.5" stroke="#000" stroke-width="1"/>
<line x1="1320" y1="40.5" x2="1322" y2="40.5" stroke="#000" stroke-width="1"/>
<line x1="1320" y1="74.5" x2="1322" y2="74.5" stroke="#000" stroke-width="1"/>
<line x1="1320" y1="142.5" x2="1322" y2="142.5" stroke="#000" stroke-width="1"/>
<line x1="1320" y1="176.5" x2="1322" y2="176.5" stroke="#000" stroke-width="1"/>
<line x1="1320" y1="210.5" x2="1322" y2="210.5" stroke="#000" stroke-width="1"/>
<line x1="1320" y1="244.5" x2="1322" y2="244.5" stroke="#000" stroke-width="1"/>
<line x1="1320" y1="278.5" x2="1322" y2="278.5" stroke="#000" stroke-width="1"/>
<line x1="1320" y1="312.5" x2="1322" y2="312.5" stroke="#000" stroke-width="1"/>
<line x1="1320" y1="346.5" x2="1322" y2="346.5" stroke="#000" stroke-width="1"/>
<line x1="1320" y1="380.5" x2="1322" y2="380.5" stroke="#000" stroke-width="1"/>
<line x1="1320" y1="414.5" x2="1322" y2="414.5" stroke="#000" stroke-width="1"/>
<line x1="1320" y1="447.5" x2="1322" y2="447.5" stroke="#000" stroke-width="1"/>
<line x1="1320" y1="480.5" x2="1322" y2="480.5" stroke="#000" stroke-width="1"/>
<rect x="1321" y="102" width="39" height="11" fill="#000"/>
</g>
<text x="1325.5" y="8.6" font-size="10.2" fill="#000" textLength="32.3" lengthAdjust="spacingAndGlyphs" >1.33980</text>
<text x="1325.5" y="42.6" font-size="10.2" fill="#000" textLength="32.3" lengthAdjust="spacingAndGlyphs" >1.33860</text>
<text x="1325.5" y="76.6" font-size="10.2" fill="#000" textLength="32.3" lengthAdjust="spacingAndGlyphs" >1.33740</text>
<text x="1325.5" y="144.6" font-size="10.2" fill="#000" textLength="32.3" lengthAdjust="spacingAndGlyphs" >1.33500</text>
<text x="1325.5" y="178.6" font-size="10.2" fill="#000" textLength="32.3" lengthAdjust="spacingAndGlyphs" >1.33380</text>
<text x="1325.5" y="212.6" font-size="10.2" fill="#000" textLength="32.3" lengthAdjust="spacingAndGlyphs" >1.33260</text>
<text x="1325.5" y="246.6" font-size="10.2" fill="#000" textLength="32.3" lengthAdjust="spacingAndGlyphs" >1.33140</text>
<text x="1325.5" y="280.6" font-size="10.2" fill="#000" textLength="32.3" lengthAdjust="spacingAndGlyphs" >1.33020</text>
<text x="1325.5" y="314.6" font-size="10.2" fill="#000" textLength="32.3" lengthAdjust="spacingAndGlyphs" >1.32900</text>
<text x="1325.5" y="348.6" font-size="10.2" fill="#000" textLength="32.3" lengthAdjust="spacingAndGlyphs" >1.32780</text>
<text x="1325.5" y="382.6" font-size="10.2" fill="#000" textLength="32.3" lengthAdjust="spacingAndGlyphs" >1.32660</text>
<text x="1325.5" y="416.6" font-size="10.2" fill="#000" textLength="32.3" lengthAdjust="spacingAndGlyphs" >1.32540</text>
<text x="1325.5" y="449.6" font-size="10.2" fill="#000" textLength="32.3" lengthAdjust="spacingAndGlyphs" >1.32425</text>
<text x="1325.5" y="482.6" font-size="10.2" fill="#000" textLength="32.3" lengthAdjust="spacingAndGlyphs" >1.32310</text>
<text x="1325.5" y="110.6" font-size="10.2" fill="#fff" textLength="32.3" lengthAdjust="spacingAndGlyphs" >1.33621</text>
<text x="1322.5" y="496" font-size="10.2" fill="#000" textLength="15.299999999999999" lengthAdjust="spacingAndGlyphs" >100</text>
<text x="1322.5" y="506" font-size="10.2" fill="#000" textLength="10.2" lengthAdjust="spacingAndGlyphs" >70</text>
<text x="1322.5" y="528.8" font-size="10.2" fill="#000" textLength="10.2" lengthAdjust="spacingAndGlyphs" >30</text>
<text x="1322.5" y="539.8" font-size="10.2" fill="#000" textLength="5.1" lengthAdjust="spacingAndGlyphs" >0</text>
<text x="1322.5" y="556" font-size="10.2" fill="#000" textLength="15.299999999999999" lengthAdjust="spacingAndGlyphs" >100</text>
<text x="1322.5" y="559.3" font-size="10.2" fill="#000" textLength="10.2" lengthAdjust="spacingAndGlyphs" >80</text>
<text x="1322.5" y="588.5" font-size="10.2" fill="#000" textLength="10.2" lengthAdjust="spacingAndGlyphs" >20</text>
<text x="1322.5" y="593" font-size="10.2" fill="#000" textLength="5.1" lengthAdjust="spacingAndGlyphs" >0</text>
<g shape-rendering="crispEdges">
<line x1="3.5" y1="597" x2="3.5" y2="600" stroke="#000" stroke-width="1"/>
<line x1="67.5" y1="597" x2="67.5" y2="600" stroke="#000" stroke-width="1"/>
<line x1="131.5" y1="597" x2="131.5" y2="600" stroke="#000" stroke-width="1"/>
<line x1="195.5" y1="597" x2="195.5" y2="600" stroke="#000" stroke-width="1"/>
<line x1="259.5" y1="597" x2="259.5" y2="600" stroke="#000" stroke-width="1"/>
<line x1="323.5" y1="597" x2="323.5" y2="600" stroke="#000" stroke-width="1"/>
<line x1="387.5" y1="597" x2="387.5" y2="600" stroke="#000" stroke-width="1"/>
<line x1="451.5" y1="597" x2="451.5" y2="600" stroke="#000" stroke-width="1"/>
<line x1="515.5" y1="597" x2="515.5" y2="600" stroke="#000" stroke-width="1"/>
<line x1="579.5" y1="597" x2="579.5" y2="600" stroke="#000" stroke-width="1"/>
<line x1="643.5" y1="597" x2="643.5" y2="600" stroke="#000" stroke-width="1"/>
<line x1="707.5" y1="597" x2="707.5" y2="600" stroke="#000" stroke-width="1"/>
<line x1="771.5" y1="597" x2="771.5" y2="600" stroke="#000" stroke-width="1"/>
<line x1="835.5" y1="597" x2="835.5" y2="600" stroke="#000" stroke-width="1"/>
<line x1="899.5" y1="597" x2="899.5" y2="600" stroke="#000" stroke-width="1"/>
<line x1="963.5" y1="597" x2="963.5" y2="600" stroke="#000" stroke-width="1"/>
<line x1="1027.5" y1="597" x2="1027.5" y2="600" stroke="#000" stroke-width="1"/>
</g>
<text x="2.6" y="608.8" font-size="10.2" fill="#000" textLength="49.5" lengthAdjust="spacingAndGlyphs" >16 Jan 2013</text>
<text x="66.6" y="608.8" font-size="10.2" fill="#000" textLength="52.5" lengthAdjust="spacingAndGlyphs" >16 Jan 15:15</text>
<text x="130.6" y="608.8" font-size="10.2" fill="#000" textLength="52.5" lengthAdjust="spacingAndGlyphs" >16 Jan 16:35</text>
<text x="194.6" y="608.8" font-size="10.2" fill="#000" textLength="52.5" lengthAdjust="spacingAndGlyphs" >16 Jan 17:55</text>
<text x="258.6" y="608.8" font-size="10.2" fill="#000" textLength="52.5" lengthAdjust="spacingAndGlyphs" >16 Jan 19:15</text>
<text x="322.6" y="608.8" font-size="10.2" fill="#000" textLength="52.5" lengthAdjust="spacingAndGlyphs" >16 Jan 20:35</text>
<text x="386.6" y="608.8" font-size="10.2" fill="#000" textLength="52.5" lengthAdjust="spacingAndGlyphs" >16 Jan 21:55</text>
<text x="450.6" y="608.8" font-size="10.2" fill="#000" textLength="52.5" lengthAdjust="spacingAndGlyphs" >16 Jan 23:15</text>
<text x="514.6" y="608.8" font-size="10.2" fill="#000" textLength="52.5" lengthAdjust="spacingAndGlyphs" >17 Jan 00:35</text>
<text x="578.6" y="608.8" font-size="10.2" fill="#000" textLength="52.5" lengthAdjust="spacingAndGlyphs" >17 Jan 01:55</text>
<text x="642.6" y="608.8" font-size="10.2" fill="#000" textLength="52.5" lengthAdjust="spacingAndGlyphs" >17 Jan 03:15</text>
<text x="706.6" y="608.8" font-size="10.2" fill="#000" textLength="52.5" lengthAdjust="spacingAndGlyphs" >17 Jan 04:35</text>
<text x="770.6" y="608.8" font-size="10.2" fill="#000" textLength="52.5" lengthAdjust="spacingAndGlyphs" >17 Jan 05:55</text>
<text x="834.6" y="608.8" font-size="10.2" fill="#000" textLength="52.5" lengthAdjust="spacingAndGlyphs" >17 Jan 07:15</text>
<text x="898.6" y="608.8" font-size="10.2" fill="#000" textLength="52.5" lengthAdjust="spacingAndGlyphs" >17 Jan 08:35</text>
<text x="962.6" y="608.8" font-size="10.2" fill="#000" textLength="52.5" lengthAdjust="spacingAndGlyphs" >17 Jan 09:55</text>
<text x="1026.6" y="608.8" font-size="10.2" fill="#000" textLength="52.5" lengthAdjust="spacingAndGlyphs" >17 Jan 11:15</text>
<text x="7.5" y="13.9" font-size="10.2" fill="#000" textLength="54" lengthAdjust="spacingAndGlyphs" >EURUSD,M5</text>
<text x="68" y="13.9" font-size="10.2" fill="#000" textLength="32.3" lengthAdjust="spacingAndGlyphs" >1.33637</text>
<text x="104.2" y="13.9" font-size="10.2" fill="#000" textLength="32.3" lengthAdjust="spacingAndGlyphs" >1.33639</text>
<text x="140.4" y="13.9" font-size="10.2" fill="#000" textLength="32.3" lengthAdjust="spacingAndGlyphs" >1.33617</text>
<text x="176.4" y="13.9" font-size="10.2" fill="#000" textLength="32.3" lengthAdjust="spacingAndGlyphs" >1.33621</text>
<text x="3.8" y="475.7" font-size="19.5" fill="#000" textLength="62" lengthAdjust="spacingAndGlyphs" stroke="#000" stroke-width="0.45">Candle:</text>
<text x="78.8" y="475.7" font-size="19.5" fill="#000" textLength="50.6" lengthAdjust="spacingAndGlyphs" stroke="#000" stroke-width="0.45">03:21</text>
<g shape-rendering="crispEdges">
<rect x="1191" y="41" width="16" height="5" fill="#ff0000"/>
<rect x="1211" y="41" width="16" height="5" fill="#ff6347"/>
<rect x="1231" y="41" width="16" height="5" fill="#00ff00"/>
<rect x="1251" y="41" width="16" height="5" fill="#00ff00"/>
<rect x="1271" y="41" width="16" height="5" fill="#00ff00"/>
<rect x="1291" y="41" width="16" height="5" fill="#00ff00"/>
<rect x="1191" y="49" width="16" height="5" fill="#ff0000"/>
<rect x="1211" y="49" width="16" height="5" fill="#ffa500"/>
<rect x="1231" y="49" width="16" height="5" fill="#00ff00"/>
<rect x="1251" y="49" width="16" height="5" fill="#00ff00"/>
<rect x="1271" y="49" width="16" height="5" fill="#00ff00"/>
<rect x="1291" y="49" width="16" height="5" fill="#00ff00"/>
<rect x="1191" y="57" width="16" height="5" fill="#ff0000"/>
<rect x="1211" y="57" width="16" height="5" fill="#00ff00"/>
<rect x="1231" y="57" width="16" height="5" fill="#00ff00"/>
<rect x="1251" y="57" width="16" height="5" fill="#00ff00"/>
<rect x="1271" y="57" width="16" height="5" fill="#00ff00"/>
<rect x="1291" y="57" width="16" height="5" fill="#00ff00"/>
</g>
<text x="1192" y="36" font-size="8" fill="#c8c8c8" >M1</text>
<text x="1211.5" y="36" font-size="8" fill="#c8c8c8" >M5</text>
<text x="1230" y="36" font-size="8" fill="#c8c8c8" >M15</text>
<text x="1251" y="36" font-size="8" fill="#c8c8c8" >M30</text>
<text x="1272" y="36" font-size="8" fill="#c8c8c8" >H1</text>
<text x="1292" y="36" font-size="8" fill="#c8c8c8" >H4</text>
<text x="1179" y="45.8" font-size="8" fill="#c8c8c8" text-anchor="end" >MACD</text>
<text x="1179" y="53.8" font-size="8" fill="#c8c8c8" text-anchor="end" >STR</text>
<text x="1179" y="61.8" font-size="8" fill="#c8c8c8" text-anchor="end" >EMA</text>
<text x="1306.8" y="81.5" font-size="19" fill="#00ff00" text-anchor="end" >1.33621</text>
<text x="1278.5" y="94.6" font-size="12" fill="#b0c4de" text-anchor="end" >Spread</text>
<text x="1308" y="94.6" font-size="12" fill="#ffc930" text-anchor="end" >13.0</text>
<text x="1278.5" y="109.7" font-size="12" fill="#b0c4de" text-anchor="end" >Pips to Open</text>
<text x="1308" y="109.7" font-size="12" fill="#00ff00" text-anchor="end" >714</text>
<text x="1278.5" y="124.7" font-size="12" fill="#b0c4de" text-anchor="end" >Hi to Low</text>
<text x="1308" y="124.7" font-size="12" fill="#ffc930" text-anchor="end" >1009</text>
<text x="1278.5" y="139.6" font-size="12" fill="#b0c4de" text-anchor="end" >Daily Av</text>
<text x="1308" y="139.6" font-size="12" fill="#00ff00" text-anchor="end" >810.0</text>
<text x="1318" y="33.8" font-size="10.2" fill="#ff0000" text-anchor="end" textLength="58.3" lengthAdjust="spacingAndGlyphs" >261.8 1.33876</text>
<text x="1318" y="161.8" font-size="10.2" fill="#ff0000" text-anchor="end" textLength="58.3" lengthAdjust="spacingAndGlyphs" >161.8 1.33424</text>
<text x="1318" y="240.8" font-size="10.2" fill="#ff0000" text-anchor="end" textLength="58.3" lengthAdjust="spacingAndGlyphs" >100.0 1.33145</text>
<text x="1318" y="268.8" font-size="10.2" fill="#ff0000" text-anchor="end" textLength="54" lengthAdjust="spacingAndGlyphs" >78.6 1.33048</text>
<text x="1318" y="289.8" font-size="10.2" fill="#ff0000" text-anchor="end" textLength="54" lengthAdjust="spacingAndGlyphs" >61.8 1.32972</text>
<text x="1318" y="304.8" font-size="10.2" fill="#ff0000" text-anchor="end" textLength="54" lengthAdjust="spacingAndGlyphs" >50.0 1.32919</text>
<text x="1318" y="320.8" font-size="10.2" fill="#ff0000" text-anchor="end" textLength="57" lengthAdjust="spacingAndGlyphs" >38.2  1.32866</text>
<text x="1318" y="338.8" font-size="10.2" fill="#ff0000" text-anchor="end" textLength="54" lengthAdjust="spacingAndGlyphs" >23.6 1.32800</text>
<text x="1318" y="368.8" font-size="10.2" fill="#ff0000" text-anchor="end" textLength="49" lengthAdjust="spacingAndGlyphs" >0.0 1.32693</text>
<text x="463.6" y="322.6" font-size="10" fill="#ffe4e1" >Pivot</text>
<text x="474" y="322.8" font-size="11" fill="#b0c4de" >today</text>
<line x1="501" y1="317.5" x2="528" y2="317.5" stroke="#ff0000" stroke-width="1" stroke-dasharray="4 2 1 2" shape-rendering="crispEdges"/>
</svg></body></html>
